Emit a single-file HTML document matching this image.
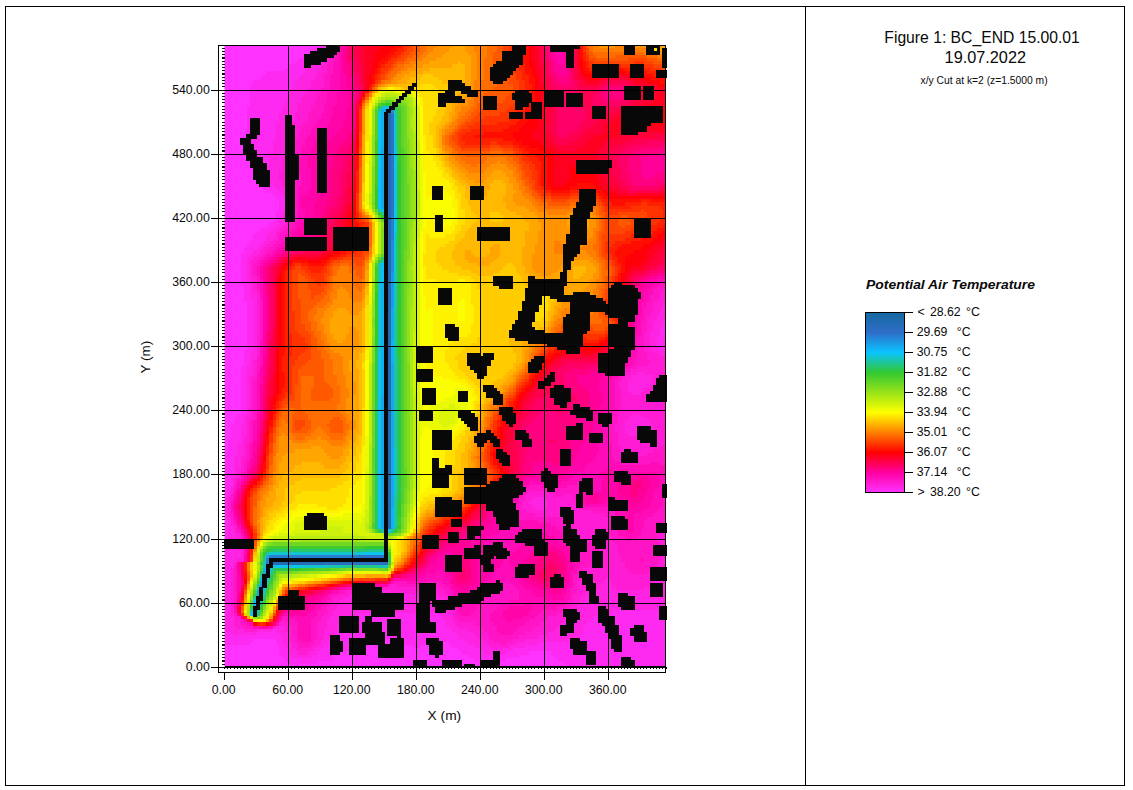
<!DOCTYPE html>
<html lang="en"><head><meta charset="utf-8"><title>Figure 1: BC_END 15.00.01</title>
<style>
html,body{margin:0;padding:0;background:#fff;}
body{width:1133px;height:790px;overflow:hidden;position:relative;font-family:"Liberation Sans",sans-serif;}
svg{position:absolute;left:0;top:0;display:block;}
text{font-family:"Liberation Sans",sans-serif;font-size:12.3px;fill:#0a0a0a;}
.t1{font-size:16.2px;}
.t3{font-size:10px;}
.lt{font-size:12px;font-weight:bold;font-style:italic;}
</style></head><body>
<svg width="1133" height="790" viewBox="0 0 1133 790">
<defs><linearGradient id="lg" x1="0" y1="0" x2="0" y2="1">
<stop offset="0" stop-color="#16699f"/><stop offset="0.1111" stop-color="#2e6ec8"/><stop offset="0.2222" stop-color="#0ac3ff"/><stop offset="0.3333" stop-color="#32c832"/><stop offset="0.5556" stop-color="#ffff00"/><stop offset="0.7778" stop-color="#ff0000"/><stop offset="0.8889" stop-color="#ff00a0"/><stop offset="1" stop-color="#ff32ff"/>
</linearGradient></defs>
<rect x="0" y="0" width="1133" height="790" fill="#fff"/>
<rect x="5.5" y="6.5" width="1119" height="779" fill="none" stroke="#000" stroke-width="1" shape-rendering="crispEdges"/>
<path d="M805.5 6V785" stroke="#000" stroke-width="1" fill="none" shape-rendering="crispEdges"/>
<rect x="218.5" y="45.5" width="447" height="627" fill="#fff" stroke="#000" stroke-width="1"/>
<rect x="224.5" y="45.5" width="441" height="621.5" fill="#ff32ff"/>
<g transform="translate(224.5,665.8) scale(3.2,-3.2075)" stroke-width="1.02" fill="none" shape-rendering="crispEdges">
<path stroke="#216bb2" d="M15 32h7M51 43h1M51 44h1M51 45h1M51 46h1M51 47h1M51 48h1M51 49h1M51 50h1M51 51h1M51 52h1M51 53h1M51 54h1M51 55h1M51 56h1M51 57h1M51 58h1M51 59h1M51 60h1M51 61h1M51 62h1M51 63h1M51 64h1M51 65h1M51 66h1M51 67h1M51 68h1M51 69h1M51 70h1M51 71h1M51 72h1M51 73h1M51 74h1M51 75h1M51 76h1M51 77h1M51 78h1M51 79h1M51 80h1M51 81h1M51 82h1M51 83h1M51 84h1M51 85h1M51 86h1M51 87h1M51 88h1M51 89h1M51 90h1M51 91h1M51 92h1M51 93h1M51 94h1M51 95h1M51 96h1M51 97h1M51 98h1M51 99h1M51 100h1M51 101h1M51 102h1M51 103h1M51 104h1M51 105h1M51 106h1M51 107h1M51 108h1M51 109h1M51 110h1M51 111h1M51 112h1M51 113h1M51 114h1M51 115h1M51 116h1M51 117h1M51 118h1M51 119h1M51 120h1M51 121h1M51 122h1M51 123h1M51 124h1M51 125h1M51 126h1M51 127h1M51 128h1M51 129h1M51 130h1M51 131h1M51 132h1M51 133h1M51 134h1M51 135h1M51 136h1M51 137h1M51 138h1M51 139h1M51 140h1M51 141h1M51 142h1M51 143h1M51 144h1M51 145h1M51 146h1M51 147h1M51 148h1M51 149h1M51 150h1M51 151h1M51 152h1M51 153h1M51 154h1M51 155h1M51 156h1M51 157h1M51 158h1M51 159h1M51 160h1M51 161h1M51 162h1M51 163h1M51 164h1M51 165h1M51 166h1M51 167h1M51 168h1M51 169h1M51 170h1M51 171h1M51 172h1"/>
<path stroke="#246cb8" d="M22 32h9"/>
<path stroke="#286dbe" d="M31 32h9"/>
<path stroke="#2c6ec4" d="M40 32h11"/>
<path stroke="#2c72cb" d="M42 34h8M52 141h1M52 142h1M52 143h1M52 144h1M52 145h1M52 146h1M52 147h1M52 148h1M52 149h1M52 150h1M52 151h1M52 152h1M52 153h1M52 154h1M52 155h1M52 156h1M52 157h1M52 158h1M52 159h1M52 160h1M52 161h1M52 162h1M52 163h1M52 164h1M52 165h1M52 166h1M52 167h1M52 168h1M52 169h1M52 170h1M52 171h1M52 172h1"/>
<path stroke="#277fd3" d="M13 32h1M13 33h1M14 34h28M52 133h1M52 134h1M52 135h1M52 136h1M52 137h1M52 138h1M52 139h1M52 140h1"/>
<path stroke="#218cdb" d="M52 123h1M52 124h1M52 125h1M52 126h1M52 127h1M52 128h1M52 129h1M52 130h1M52 131h1M52 132h1M52 173h1"/>
<path stroke="#1c98e4" d="M11 25h1M52 112h1M52 113h1M52 114h1M52 115h1M52 116h1M52 117h1M52 118h1M52 119h1M52 120h1M52 121h1M52 122h1"/>
<path stroke="#17a5ec" d="M10 22h1M10 23h1M11 26h1M12 29h1M13 34h1M49 43h1M49 44h1M49 45h1M49 46h1M49 47h1M49 48h1M49 49h1M49 50h1M52 50h1M49 51h1M52 51h1M49 52h1M52 52h1M49 53h1M52 53h1M49 54h1M52 54h1M49 55h1M52 55h1M49 56h1M52 56h1M49 57h1M52 57h1M49 58h1M52 58h1M49 59h1M52 59h1M49 60h1M52 60h1M49 61h1M52 61h1M49 62h1M52 62h1M49 63h1M52 63h1M49 64h1M52 64h1M49 65h1M52 65h1M49 66h1M52 66h1M49 67h1M52 67h1M49 68h1M52 68h1M49 69h1M52 69h1M49 70h1M52 70h1M49 71h1M52 71h1M49 72h1M52 72h1M49 73h1M52 73h1M49 74h1M52 74h1M49 75h1M52 75h1M49 76h1M52 76h1M49 77h1M52 77h1M49 78h1M52 78h1M49 79h1M52 79h1M49 80h1M52 80h1M49 81h1M52 81h1M49 82h1M52 82h1M49 83h1M52 83h1M49 84h1M52 84h1M52 85h1M52 86h1M52 87h1M52 88h1M52 89h1M52 90h1M52 91h1M52 92h1M52 93h1M52 94h1M52 102h1M52 103h1M52 104h1M52 105h1M52 106h1M52 107h1M52 108h1M52 109h1M52 110h1M52 111h1M49 143h1M49 144h1M49 145h1M49 146h1M49 147h1M49 148h1M49 149h1M49 150h1M49 151h1M49 152h1M49 153h1M49 154h1M49 155h1M49 156h1M49 157h1M49 158h1M49 159h1M49 160h1M49 161h1M50 173h1"/>
<path stroke="#11b2f4" d="M9 19h1M12 30h1M52 43h1M52 44h1M52 45h1M52 46h1M52 47h1M52 48h1M52 49h1M49 85h1M49 86h1M49 87h1M49 88h1M49 89h1M49 90h1M49 91h1M49 92h1M49 93h1M49 94h1M49 95h1M52 95h1M49 96h1M52 96h1M49 97h1M52 97h1M49 98h1M52 98h1M49 99h1M52 99h1M49 100h1M52 100h1M49 101h1M52 101h1M49 102h1M49 103h1M49 104h1M49 105h1M49 106h1M49 107h1M49 108h1M49 109h1M49 110h1M49 111h1M49 112h1M49 113h1M49 114h1M49 115h1M49 116h1M49 117h1M49 118h1M49 119h1M49 162h1M49 163h1M49 164h1M49 165h1M49 166h1M49 167h1M49 168h1M49 169h1M49 170h1M49 171h1M49 172h1M49 173h1"/>
<path stroke="#0cbffc" d="M9 20h1M11 27h1M49 120h1M49 121h1M49 122h1M49 123h1M49 124h1M49 125h1M48 143h1M48 144h1M48 145h1M48 146h1M48 147h1M48 148h1M48 149h1M48 150h1M48 151h1M48 152h1M48 153h1M48 154h1M50 174h1"/>
<path stroke="#0ec4ea" d="M8 16h1M10 24h1M12 24h1M13 27h1M15 31h9M43 35h7M51 42h1M48 43h1M48 44h1M48 45h1M48 46h1M48 47h1M48 48h1M48 49h1M48 50h1M48 51h1M48 52h1M48 53h1M48 54h1M48 55h1M48 56h1M48 57h1M48 58h1M48 59h1M48 60h1M48 61h1M48 62h1M48 63h1M48 64h1M48 65h1M48 66h1M48 67h1M48 68h1M48 69h1M48 70h1M48 71h1M48 72h1M48 73h1M48 74h1M48 75h1M48 76h1M48 77h1M48 78h1M48 79h1M48 80h1M48 81h1M48 82h1M48 83h1M48 84h1M48 85h1M48 86h1M48 87h1M48 88h1M48 89h1M48 90h1M48 91h1M48 92h1M48 93h1M48 94h1M48 95h1M48 96h1M48 97h1M53 135h1M53 136h1M53 137h1M53 138h1M53 139h1M53 140h1M53 141h1M49 142h1M53 142h1M53 143h1M53 144h1M53 145h1M53 146h1M53 147h1M53 148h1M53 149h1M53 150h1M53 151h1M53 152h1M53 153h1M53 154h1M48 155h1M53 155h1M48 156h1M53 156h1M48 157h1M53 157h1M48 158h1M53 158h1M48 159h1M53 159h1M48 160h1M53 160h1M48 161h1M53 161h1M48 162h1M48 163h1M48 164h1M48 165h1M48 166h1M48 167h1M48 168h1M48 169h1M48 170h1M48 171h1M48 172h1"/>
<path stroke="#14c4cc" d="M8 17h1M14 30h1M12 31h1M24 31h8M12 32h1M14 35h29M53 54h1M53 55h1M53 56h1M53 57h1M53 58h1M53 59h1M53 60h1M53 61h1M53 62h1M53 63h1M53 64h1M53 65h1M53 66h1M53 67h1M48 98h1M48 99h1M48 100h1M48 101h1M48 102h1M48 103h1M48 104h1M48 105h1M48 106h1M48 107h1M48 108h1M48 109h1M48 110h1M48 111h1M48 112h1M53 112h1M48 113h1M53 113h1M48 114h1M53 114h1M48 115h1M53 115h1M48 116h1M53 116h1M48 117h1M53 117h1M48 118h1M53 118h1M48 119h1M53 119h1M53 120h1M53 121h1M53 122h1M53 123h1M53 124h1M53 125h1M53 126h1M53 127h1M53 128h1M53 129h1M53 130h1M53 131h1M53 132h1M53 133h1M53 134h1M53 162h1M53 163h1M53 164h1M53 165h1M53 166h1M53 167h1M53 168h1M53 169h1M53 170h1M53 171h1M53 172h1M49 174h1M51 174h1"/>
<path stroke="#1ac5ad" d="M10 17h1M11 20h1M9 21h1M12 23h1M13 26h1M11 28h1M14 29h1M32 31h5M48 31h3M49 42h1M53 43h1M53 44h1M53 45h1M53 46h1M53 47h1M53 48h1M53 49h1M53 50h1M53 51h1M53 52h1M53 53h1M53 68h1M53 69h1M53 70h1M53 71h1M53 72h1M53 73h1M53 74h1M53 75h1M53 76h1M53 77h1M53 78h1M53 79h1M53 80h1M53 81h1M53 82h1M53 83h1M53 84h1M53 85h1M53 86h1M53 87h1M53 88h1M53 89h1M53 90h1M53 91h1M53 92h1M53 93h1M53 94h1M53 95h1M53 96h1M53 97h1M53 98h1M53 99h1M53 100h1M53 101h1M53 102h1M53 103h1M53 104h1M53 105h1M53 106h1M53 107h1M53 108h1M53 109h1M53 110h1M53 111h1M48 120h1M48 121h1M48 122h1M48 123h1M48 124h1M48 125h1M49 126h1M48 142h1M48 173h1M53 173h1"/>
<path stroke="#20c68e" d="M12 22h1M10 25h1M13 25h1M37 31h11M12 33h1M13 35h1M45 36h5M52 42h1M49 141h1"/>
<path stroke="#26c66f" d="M10 16h1M11 19h1M14 28h1M51 33h1M12 34h1M15 36h30M47 43h1M47 44h1M47 45h1M47 46h1M47 47h1M47 48h1M47 49h1M47 50h1M47 51h1M47 52h1M47 53h1M47 54h1M47 55h1M47 56h1M47 57h1M47 58h1M47 59h1M47 60h1M47 61h1M47 62h1M47 63h1M47 64h1M47 65h1M47 66h1M47 67h1M47 68h1M47 69h1M47 70h1M47 71h1M47 72h1M47 73h1M47 74h1M47 75h1M47 76h1M47 77h1M47 78h1M47 79h1M47 80h1M47 81h1M53 174h1"/>
<path stroke="#2cc751" d="M8 18h1M12 21h1M9 22h1M13 24h1M14 27h1M11 29h1M15 30h5M51 34h1M14 36h1M48 42h1M54 52h1M54 53h1M54 54h1M54 55h1M54 56h1M54 57h1M54 58h1M54 59h1M54 60h1M54 61h1M54 62h1M54 63h1M54 64h1M54 65h1M54 66h1M54 67h1M54 68h1M54 69h1M54 70h1M54 71h1M54 72h1M54 73h1M54 74h1M54 75h1M54 76h1M54 77h1M54 78h1M54 79h1M54 80h1M54 81h1M47 82h1M54 82h1M47 83h1M54 83h1M47 84h1M54 84h1M47 85h1M54 85h1M47 86h1M54 86h1M47 87h1M54 87h1M47 88h1M54 88h1M47 89h1M54 89h1M47 90h1M54 90h1M47 91h1M54 91h1M47 92h1M54 92h1M47 93h1M54 93h1M47 94h1M54 94h1M47 95h1M54 95h1M47 96h1M54 96h1M47 97h1M47 98h1M47 99h1M47 100h1M49 127h1"/>
<path stroke="#32c832" d="M11 18h1M20 30h4M12 35h1M13 36h1M44 37h6M53 42h1M54 43h1M54 47h1M54 48h1M54 49h1M54 50h1M54 51h1M54 97h1M54 98h1M54 99h1M54 100h1M47 101h1M54 101h1M47 102h1M54 102h1M47 103h1M54 103h1M47 104h1M54 104h1M47 105h1M54 105h1M47 106h1M54 106h1M47 107h1M54 107h1M47 108h1M54 108h1M47 109h1M54 109h1M47 110h1M54 110h1M47 111h1M54 111h1M47 112h1M54 112h1M47 113h1M54 113h1M47 114h1M54 114h1M47 115h1M54 115h1M47 116h1M54 116h1M54 117h1M54 118h1M54 119h1M54 120h1M54 121h1M54 122h1M54 123h1M54 124h1M54 125h1M48 126h1M54 126h1M54 127h1M54 128h1M54 129h1M54 130h1M54 131h1M54 132h1M54 133h1M54 134h1M54 135h1M54 136h1M54 137h1M54 138h1M54 139h1M49 140h1M54 140h1M48 141h1M54 141h1M54 142h1M47 143h1M54 143h1M47 144h1M54 144h1M47 145h1M54 145h1M47 146h1M54 146h1M47 147h1M54 147h1M47 148h1M54 148h1M47 149h1M54 149h1M54 150h1M54 151h1M54 152h1M54 153h1M54 154h1M54 155h1M54 156h1M54 157h1M48 174h1M50 175h2"/>
<path stroke="#41cc2e" d="M12 20h1M13 23h1M10 26h1M14 26h1M15 29h1M24 30h4M11 32h1M51 32h1M51 35h1M14 37h30M54 44h1M54 45h1M54 46h1M47 117h1M47 118h1M47 119h1M47 120h1M47 121h1M47 122h1M47 123h1M47 124h1M47 150h1M47 151h1M47 152h1M47 153h1M47 154h1M47 155h1M47 156h1M47 157h1M47 158h1M54 158h1M47 159h1M54 159h1M47 160h1M54 160h1M47 161h1M54 161h1M47 162h1M54 162h1M47 163h1M54 163h1M54 164h1M54 165h1M54 166h1M54 167h1M54 168h1M54 169h1M54 170h1M54 171h1M54 172h1M54 173h1M49 175h1M52 175h1"/>
<path stroke="#51d02b" d="M11 17h1M8 19h1M13 22h1M9 23h1M14 25h1M15 28h1M11 30h1M28 30h5M12 36h1M13 37h1M47 42h1M54 42h1M46 43h1M46 44h1M55 51h1M55 52h1M55 53h1M55 54h1M55 55h1M55 56h1M55 57h1M55 58h1M55 59h1M55 60h1M55 61h1M55 62h1M55 63h1M55 64h1M55 65h1M55 66h1M55 67h1M55 68h1M55 69h1M55 70h1M55 71h1M55 72h1M55 73h1M55 74h1M55 75h1M55 76h1M55 77h1M55 78h1M55 79h1M55 80h1M55 81h1M55 82h1M55 83h1M55 84h1M55 85h1M55 86h1M55 87h1M55 88h1M55 89h1M55 90h1M55 91h1M55 92h1M55 93h1M55 94h1M55 95h1M55 96h1M55 97h1M55 98h1M55 99h1M55 100h1M55 101h1M55 102h1M55 103h1M55 104h1M55 105h1M55 106h1M55 107h1M55 108h1M55 109h1M55 110h1M55 111h1M55 112h1M55 113h1M55 114h1M55 115h1M55 116h1M55 117h1M55 118h1M55 119h1M55 120h1M55 121h1M55 122h1M55 123h1M55 124h1M47 125h1M55 125h1M55 126h1M55 127h1M55 128h1M55 129h1M55 130h1M55 131h1M55 132h1M55 133h1M55 134h1M55 135h1M55 136h1M55 137h1M55 138h1M55 139h1M55 140h1M55 141h1M55 142h1M55 143h1M55 144h1M55 145h1M55 146h1M55 147h1M55 148h1M55 149h1M55 150h1M55 151h1M55 152h1M55 153h1M55 154h1M55 155h1M55 156h1M55 157h1M55 158h1M55 159h1M55 160h1M55 161h1M47 164h1M47 165h1M47 166h1M47 167h1M47 168h1M47 169h1M47 170h1M47 171h1M47 172h1M47 173h1M54 174h1"/>
<path stroke="#60d427" d="M12 19h1M14 24h1M10 27h1M15 27h1M33 30h3M50 30h1M11 31h1M11 33h1M11 34h1M51 41h1M46 45h1M46 46h1M46 47h1M55 47h1M46 48h1M55 48h1M46 49h1M55 49h1M46 50h1M55 50h1M46 51h1M46 52h1M46 53h1M46 54h1M46 55h1M46 56h1M56 56h1M46 57h1M56 57h1M46 58h1M56 58h1M46 59h1M56 59h1M46 60h1M56 60h1M46 61h1M56 61h1M46 62h1M46 63h1M46 64h1M46 65h1M46 66h1M46 67h1M48 127h1M49 128h1M56 130h1M56 131h1M56 132h1M56 133h1M56 134h1M56 135h1M56 136h1M56 137h1M56 138h1M49 139h1M56 139h1M48 140h1M56 140h1M56 141h1M47 142h1M56 142h1M56 143h1M56 144h1M56 145h1M56 146h1M56 147h1M56 148h1M56 149h1M56 150h1M56 151h1M56 152h1M56 153h1M56 154h1M56 155h1M56 156h1M56 157h1M56 158h1M56 159h1M56 160h1M55 162h1M55 163h1M55 164h1M55 165h1M55 166h1M55 167h1M55 168h1M55 169h1M55 170h1M55 171h1M55 172h1M55 173h1M55 174h1M48 175h1M54 175h1M50 176h2"/>
<path stroke="#70d823" d="M11 16h1M8 20h1M13 21h1M9 24h1M16 29h5M36 30h2M48 30h2M51 31h1M11 35h1M51 36h1M15 38h35M52 41h1M55 43h1M55 44h1M55 45h1M55 46h1M56 51h1M56 52h1M56 53h1M56 54h1M56 55h1M56 62h1M56 63h1M56 64h1M56 65h1M56 66h1M56 67h1M46 68h1M56 68h1M46 69h1M56 69h1M46 70h1M56 70h1M46 71h1M56 71h1M46 72h1M56 72h1M46 73h1M56 73h1M46 74h1M56 74h1M46 75h1M56 75h1M46 76h1M56 76h1M46 77h1M56 77h1M46 78h1M56 78h1M46 79h1M56 79h1M46 80h1M56 80h1M46 81h1M56 81h1M46 82h1M56 82h1M46 83h1M56 83h1M46 84h1M56 84h1M46 85h1M56 85h1M46 86h1M56 86h1M46 87h1M56 87h1M46 88h1M56 88h1M46 89h1M56 89h1M46 90h1M56 90h1M46 91h1M56 91h1M46 92h1M56 92h1M46 93h1M56 93h1M46 94h1M56 94h1M56 95h1M56 96h1M56 97h1M56 98h1M56 99h1M56 100h1M56 101h1M56 102h1M56 103h1M56 104h1M56 105h1M56 106h1M56 107h1M56 108h1M56 109h1M56 110h1M56 111h1M56 112h1M56 113h1M56 114h1M56 115h1M56 116h1M56 117h1M56 118h1M56 119h1M56 120h1M56 121h1M56 122h1M56 123h1M56 124h1M56 125h1M56 126h1M56 127h1M56 128h1M56 129h1M57 140h1M57 141h1M57 142h1M57 143h1M46 144h1M57 144h1M57 145h1M57 146h1M57 147h1M57 148h1M57 149h1M57 150h1M56 161h1M56 162h1M56 163h1M56 164h1M56 165h1M56 166h1M56 167h1M56 168h1M56 169h1M56 170h1M56 171h1M56 172h1M56 173h1M47 174h1M56 174h1M55 175h1M52 176h1"/>
<path stroke="#7fdd1f" d="M10 15h1M12 18h1M14 23h1M9 25h1M15 26h1M10 28h1M16 28h1M21 29h2M38 30h10M12 37h1M14 38h1M53 41h1M46 42h1M55 42h1M56 47h1M56 48h1M56 49h1M56 50h1M57 55h1M57 56h1M57 57h1M57 58h1M57 59h1M57 60h1M57 61h1M57 62h1M57 63h1M57 64h1M57 65h1M57 66h1M57 67h1M57 68h1M57 69h1M57 70h1M57 71h1M57 72h1M57 73h1M57 74h1M57 75h1M57 76h1M57 77h1M57 78h1M57 79h1M57 80h1M57 81h1M57 82h1M57 83h1M57 84h1M57 85h1M57 86h1M57 87h1M57 88h1M57 89h1M57 90h1M57 91h1M57 92h1M57 93h1M57 94h1M46 95h1M46 96h1M46 97h1M46 98h1M46 99h1M46 100h1M46 101h1M46 102h1M46 106h1M46 107h1M46 108h1M57 118h1M57 119h1M47 126h1M57 127h1M57 128h1M49 129h1M57 129h1M49 130h1M57 130h1M49 131h1M57 131h1M49 132h1M57 132h1M49 133h1M57 133h1M49 134h1M57 134h1M49 135h1M57 135h1M49 136h1M57 136h1M57 137h1M57 138h1M57 139h1M47 141h1M46 143h1M46 145h1M46 146h1M46 147h1M46 148h1M46 149h1M46 150h1M46 151h1M57 151h1M46 152h1M57 152h1M46 153h1M57 153h1M46 154h1M57 154h1M46 155h1M57 155h1M57 156h1M57 157h1M57 158h1M57 159h1M57 160h1M57 161h1M57 162h1M57 163h1M57 164h1M56 175h1M49 176h1M55 176h1"/>
<path stroke="#8ee11c" d="M9 15h1M13 20h1M8 21h1M14 22h1M15 24h1M15 25h1M16 27h1M10 29h1M23 29h3M11 36h1M13 38h1M54 41h1M45 43h1M56 43h1M56 44h1M56 45h1M56 46h1M57 51h1M57 52h1M57 53h1M57 54h1M57 95h1M57 96h1M57 97h1M57 98h1M57 99h1M57 100h1M57 101h1M57 102h1M46 103h1M57 103h1M46 104h1M57 104h1M46 105h1M57 105h1M57 106h1M57 107h1M57 108h1M46 109h1M57 109h1M46 110h1M57 110h1M46 111h1M57 111h1M46 112h1M57 112h1M46 113h1M57 113h1M46 114h1M57 114h1M57 115h1M57 116h1M57 117h1M57 120h1M57 121h1M57 122h1M57 123h1M57 124h1M57 125h1M57 126h1M48 128h1M49 137h1M58 137h1M49 138h1M58 138h1M58 139h1M58 140h1M58 141h1M58 142h1M58 143h1M58 144h1M58 145h1M58 146h1M58 147h1M58 148h1M58 149h1M58 150h1M58 151h1M58 152h1M58 153h1M58 154h1M58 155h1M46 156h1M46 157h1M46 158h1M46 159h1M46 160h1M46 161h1M46 162h1M46 163h1M46 164h1M46 165h1M57 165h1M57 166h1M57 167h1M57 168h1M57 169h1M57 170h1M57 171h1M57 172h1M57 173h1M57 174h1M53 176h1M56 176h1"/>
<path stroke="#9ee518" d="M11 15h1M7 17h1M12 17h1M14 21h1M8 22h1M15 23h1M9 26h1M16 26h1M26 29h4M10 32h1M51 37h1M24 39h18M56 42h1M45 44h1M45 45h1M45 46h1M45 47h1M45 48h1M57 48h1M45 49h1M57 49h1M45 50h1M57 50h1M45 51h1M45 52h1M58 55h1M58 56h1M58 57h1M58 58h1M58 59h1M58 60h1M58 61h1M58 62h1M58 63h1M58 64h1M58 65h1M58 66h1M58 67h1M58 68h1M58 69h1M58 70h1M58 71h1M58 72h1M58 73h1M58 74h1M58 75h1M58 76h1M58 77h1M58 78h1M58 79h1M58 80h1M58 81h1M58 82h1M58 83h1M58 84h1M58 85h1M58 86h1M58 112h1M58 113h1M58 114h1M46 115h1M58 115h1M46 116h1M58 116h1M46 117h1M58 117h1M46 118h1M58 118h1M46 119h1M58 119h1M46 120h1M58 120h1M58 121h1M58 122h1M58 123h1M58 125h1M58 126h1M47 127h1M58 127h1M58 128h1M58 129h1M58 130h1M58 131h1M58 132h1M58 133h1M58 134h1M58 135h1M58 136h1M48 139h1M59 139h1M59 140h1M59 141h1M46 142h1M59 142h1M59 143h1M59 144h1M59 145h1M59 146h1M59 147h1M59 148h1M59 149h1M59 150h1M59 151h1M59 152h1M59 153h1M59 154h1M58 156h1M58 157h1M58 158h1M58 159h1M58 160h1M58 161h1M58 162h1M58 163h1M58 164h1M58 165h1M46 166h1M58 166h1M46 167h1M58 167h1M46 168h1M46 169h1M46 170h1M46 171h1M46 172h1M58 172h1M46 173h1M58 173h1M47 175h1M57 175h1M48 176h1M57 176h1M50 177h4M56 177h1"/>
<path stroke="#ade914" d="M7 16h1M7 18h1M13 19h1M15 22h1M8 23h1M16 25h1M17 28h4M30 29h3M10 30h1M51 30h1M10 31h1M12 38h1M15 39h9M42 39h8M51 40h1M45 42h1M57 45h1M57 46h1M57 47h1M58 51h1M58 52h1M45 53h1M58 53h1M45 54h1M58 54h1M45 55h1M45 56h1M45 57h1M45 58h1M45 59h1M45 60h1M45 61h1M45 62h1M45 63h1M45 64h1M45 65h1M45 66h1M45 67h1M45 68h1M45 69h1M58 87h1M58 88h1M58 89h1M58 90h1M58 91h1M58 92h1M58 93h1M58 94h1M58 95h1M58 96h1M58 97h1M58 98h1M58 99h1M58 100h1M58 101h1M58 102h1M58 103h1M58 104h1M58 105h1M58 106h1M58 107h1M58 108h1M58 109h1M58 110h1M58 111h1M46 121h1M46 122h1M46 123h1M46 124h1M58 124h1M46 125h1M59 132h1M59 133h1M59 134h1M59 135h1M59 136h1M59 137h1M59 138h1M47 140h1M59 155h1M59 156h1M59 157h1M59 158h1M59 159h1M59 160h1M59 161h1M59 162h1M59 163h1M59 164h1M59 165h1M59 166h1M58 168h1M58 169h1M58 170h1M58 171h1M58 174h1M58 175h1M58 176h1M49 177h1M54 177h1M57 177h1"/>
<path stroke="#bced10" d="M12 16h1M13 18h1M7 19h1M14 20h1M9 27h1M17 27h1M21 28h3M33 29h2M52 32h1M10 33h1M10 34h1M11 37h1M14 39h1M20 40h24M52 40h1M49 41h1M55 41h1M44 43h1M57 43h1M44 44h1M57 44h1M58 49h1M58 50h1M59 56h1M59 57h1M59 58h1M59 59h1M59 60h1M59 61h1M59 62h1M59 63h1M59 64h1M59 65h1M59 66h1M59 67h1M59 68h1M59 69h1M45 70h1M59 70h1M45 71h1M59 71h1M45 72h1M59 72h1M45 73h1M59 73h1M45 74h1M59 74h1M45 75h1M59 75h1M45 76h1M59 76h1M45 77h1M59 77h1M45 78h1M59 78h1M45 79h1M59 79h1M45 80h1M59 80h1M45 81h1M59 81h1M45 82h1M59 82h1M45 83h1M59 83h1M45 84h1M59 84h1M45 85h1M45 86h1M45 87h1M45 88h1M45 89h1M45 90h1M45 91h1M45 92h1M45 93h1M45 94h1M59 105h1M59 106h1M59 107h1M59 108h1M59 109h1M59 110h1M59 111h1M59 112h1M59 113h1M59 114h1M59 115h1M59 116h1M59 117h1M59 118h1M59 119h1M59 120h1M59 121h1M59 122h1M59 123h1M59 124h1M59 125h1M59 126h1M59 127h1M59 128h1M48 129h1M59 129h1M48 130h1M59 130h1M48 131h1M59 131h1M48 132h1M48 133h1M48 134h1M48 135h1M48 136h1M48 137h1M48 138h1M60 141h1M60 142h1M60 143h1M45 144h1M60 144h1M45 145h1M60 145h1M45 146h1M60 146h1M45 147h1M60 147h1M60 148h1M59 167h1M59 168h1M59 169h1M59 170h1M59 171h1M59 172h1M59 173h1M46 174h1M59 174h1M48 177h1M58 177h1M50 178h4M57 178h1"/>
<path stroke="#ccf10c" d="M14 19h1M15 21h1M8 24h1M16 24h1M24 28h2M35 29h2M10 35h1M51 38h1M13 39h1M15 40h5M44 40h6M53 40h1M22 41h20M47 41h2M30 42h7M44 42h1M57 42h1M32 43h5M44 45h1M44 46h1M44 47h1M58 47h1M44 48h1M58 48h1M59 52h1M59 53h1M59 54h1M59 55h1M59 85h1M59 86h1M59 87h1M59 88h1M59 89h1M59 90h1M59 91h1M59 92h1M59 93h1M59 94h1M45 95h1M59 95h1M45 96h1M59 96h1M45 97h1M59 97h1M45 98h1M59 98h1M59 99h1M59 100h1M59 101h1M59 102h1M59 103h1M59 104h1M46 126h1M47 128h1M60 134h1M60 135h1M60 136h1M60 137h1M60 138h1M60 139h1M60 140h1M46 141h1M45 143h1M45 148h1M45 149h1M60 149h1M45 150h1M60 150h1M45 151h1M60 151h1M45 152h1M60 152h1M45 153h1M60 153h1M45 154h1M60 154h1M45 155h1M60 155h1M45 156h1M60 156h1M45 157h1M60 157h1M60 158h1M60 159h1M60 160h1M60 161h1M60 162h1M60 163h1M59 175h1M47 176h1M59 176h1M49 178h1M54 178h1"/>
<path stroke="#dbf509" d="M8 15h1M12 15h1M13 17h1M7 20h1M16 23h1M17 26h1M18 27h3M9 28h1M26 28h3M37 29h2M49 29h2M10 36h1M14 40h1M17 41h5M42 41h5M56 41h1M21 42h9M37 42h7M22 43h3M37 43h7M22 44h3M32 44h12M58 44h1M24 45h1M32 45h10M43 45h1M58 45h1M43 46h1M58 46h1M44 49h1M44 50h1M59 50h1M44 51h1M59 51h1M44 52h1M44 53h1M44 54h1M44 55h1M60 55h1M44 56h1M60 56h1M44 57h1M60 57h1M44 58h1M60 58h1M44 59h1M60 59h1M44 60h1M60 60h1M44 61h1M60 61h1M60 62h1M60 63h1M60 64h1M60 65h1M60 66h1M60 67h1M60 68h1M60 69h1M60 70h1M60 71h1M60 72h1M60 73h1M60 74h1M60 75h1M68 75h2M60 76h1M67 76h5M60 77h1M67 77h5M60 78h1M67 78h6M60 79h1M67 79h6M60 80h1M68 80h5M60 81h1M70 81h2M60 82h1M60 83h1M60 84h1M60 85h1M60 86h1M60 87h1M60 88h1M60 93h1M60 94h1M45 99h1M45 100h1M60 100h1M45 101h1M60 101h1M45 102h1M60 102h1M45 103h1M60 103h1M45 104h1M60 104h1M45 105h1M60 105h1M45 106h1M60 106h1M45 107h1M60 107h1M45 108h1M60 108h1M45 109h1M60 109h1M45 110h1M60 110h1M45 111h1M60 111h1M45 112h1M60 112h1M60 113h1M60 114h1M60 115h1M60 116h1M60 117h1M60 118h1M60 119h1M60 120h1M60 121h1M60 122h1M60 123h1M60 124h1M60 125h1M60 126h1M60 127h1M60 128h1M60 129h1M60 130h1M60 131h1M60 132h1M60 133h1M47 139h1M45 158h1M45 159h1M45 160h1M45 161h1M45 162h1M45 163h1M45 164h1M60 164h1M45 165h1M60 165h1M60 166h1M60 167h1M60 168h1M60 169h1M60 170h1M60 171h1M60 172h1M60 173h1M60 174h1M46 175h1M47 177h1M59 177h1M58 178h1M50 179h3"/>
<path stroke="#eafa05" d="M13 16h1M14 18h1M7 21h1M8 25h1M21 27h2M29 28h2M39 29h10M9 30h1M9 31h1M52 31h1M9 32h1M52 33h1M52 34h1M52 35h1M52 36h1M12 39h1M51 39h1M13 40h1M54 40h1M15 41h2M17 42h4M18 43h4M58 43h1M19 44h3M21 45h3M42 45h1M22 46h3M32 46h11M25 47h1M37 47h7M43 48h1M59 48h1M43 49h1M59 49h1M43 50h1M60 52h1M60 53h1M60 54h1M44 62h1M44 63h1M44 64h1M44 65h1M44 66h1M44 67h1M44 68h1M44 69h1M44 70h1M44 71h1M61 72h1M61 73h1M61 74h1M64 74h7M61 75h7M70 75h2M61 76h6M72 76h1M65 77h2M72 77h2M65 78h2M65 79h2M61 80h1M64 80h4M73 80h3M61 81h1M64 81h6M72 81h4M61 82h1M67 82h9M69 83h4M71 84h2M72 85h1M72 86h2M45 113h1M45 114h1M45 115h1M45 116h1M46 127h1M61 136h1M61 137h1M61 138h1M61 139h1M46 140h1M61 140h1M61 141h1M45 142h1M61 142h1M61 143h1M44 144h1M61 144h1M44 145h1M61 145h1M44 146h1M61 146h1M44 147h1M61 147h1M61 148h1M61 149h1M61 150h1M61 151h1M61 152h1M61 153h1M61 154h1M61 155h1M61 156h1M61 157h1M61 158h1M61 159h1M45 166h1M45 167h1M45 168h1M45 169h1M45 170h1M45 171h1M45 172h1M45 173h1M60 175h1M46 176h1M48 178h1M55 178h1M49 179h1M53 179h1M58 179h1"/>
<path stroke="#fafe01" d="M10 14h2M15 20h1M7 22h1M16 22h1M17 25h1M8 26h1M18 26h1M23 27h3M31 28h2M9 29h1M52 37h1M11 38h1M52 38h1M52 39h1M14 41h1M15 42h2M58 42h1M16 43h2M17 44h2M18 45h3M20 46h2M59 46h1M21 47h4M31 47h6M59 47h1M23 48h7M36 48h7M40 49h3M42 50h1M60 50h1M43 51h1M60 51h1M43 52h1M43 53h1M43 54h1M61 54h1M43 55h1M61 55h2M43 56h1M61 56h3M43 57h1M61 57h4M43 58h1M61 58h4M43 59h1M61 59h4M43 60h1M61 60h4M61 61h4M61 62h4M61 63h4M61 64h4M61 65h4M61 66h4M61 67h4M61 68h4M61 69h4M61 70h4M61 71h4M44 72h1M62 72h3M44 73h1M62 73h3M71 73h1M44 74h1M62 74h2M71 74h2M44 75h1M72 75h2M44 76h1M73 76h2M44 77h1M44 78h1M44 79h1M44 80h1M62 80h2M76 80h1M44 81h1M62 81h2M76 81h1M44 82h1M66 82h1M76 82h1M44 83h1M61 83h1M66 83h3M76 83h2M44 84h1M61 84h1M66 84h5M76 84h1M44 85h1M61 85h1M66 85h6M76 85h1M44 86h1M61 86h1M66 86h6M74 86h2M44 87h1M61 87h14M44 88h1M61 88h13M44 89h1M65 89h6M44 90h1M65 90h3M44 91h1M44 92h1M44 93h1M61 93h2M44 94h1M61 94h2M44 95h1M61 100h4M61 101h4M61 102h4M61 103h4M61 104h4M61 105h4M61 106h4M61 107h4M61 108h4M73 108h2M61 109h4M73 109h2M61 110h4M73 110h2M61 111h2M64 111h1M73 111h2M61 112h2M73 112h2M61 113h2M73 113h2M61 114h2M74 114h1M61 115h2M61 116h1M45 117h1M61 117h1M45 118h1M61 118h1M45 119h1M61 119h1M45 120h1M61 120h1M61 121h1M61 122h1M61 123h1M61 124h1M61 125h1M61 126h1M61 127h1M61 128h1M47 129h1M61 129h1M47 130h1M61 130h1M47 131h1M61 131h1M47 132h1M61 132h1M47 133h1M61 133h1M47 134h1M61 134h1M47 135h1M61 135h1M47 136h1M47 137h1M62 137h1M68 137h1M47 138h1M62 138h1M68 138h3M62 139h1M65 139h1M68 139h3M62 140h4M68 140h4M62 141h10M62 142h10M44 143h1M62 143h9M62 144h9M62 145h9M62 146h1M64 146h1M68 146h3M62 147h1M68 147h2M44 148h1M62 148h1M68 148h1M44 149h1M62 149h1M44 150h1M62 150h1M44 151h1M62 151h1M44 152h1M62 152h1M44 153h1M62 153h1M44 154h1M44 155h1M44 156h1M61 160h1M61 161h1M61 162h1M61 163h1M61 164h1M61 165h1M61 166h1M61 167h1M61 168h1M61 169h1M61 170h1M61 171h1M61 172h1M61 173h1M45 174h1M61 174h1M60 176h1M60 177h1M59 178h1M54 179h1"/>
<path stroke="#fff200" d="M9 14h1M12 14h1M13 15h1M6 17h1M19 26h2M26 27h2M33 28h2M51 29h1M53 35h1M53 36h1M53 37h1M53 38h1M53 39h1M12 40h1M55 40h1M13 41h1M57 41h1M14 42h1M15 43h1M59 43h1M15 44h2M59 44h1M16 45h2M59 45h1M17 46h3M19 47h2M20 48h3M30 48h6M60 48h1M22 49h10M35 49h5M60 49h1M23 50h6M37 50h5M38 51h5M38 52h5M61 52h1M39 53h4M61 53h3M39 54h4M62 54h5M39 55h4M63 55h5M40 56h3M64 56h1M41 57h2M42 58h1M43 61h1M43 62h1M67 62h2M43 63h1M67 63h2M43 64h1M67 64h2M43 65h1M65 65h4M43 66h1M65 66h4M43 67h1M65 67h4M43 68h1M71 71h1M71 72h2M72 73h2M73 74h2M74 75h1M77 79h1M77 80h1M77 81h1M77 82h1M78 83h1M77 84h2M77 85h1M76 86h2M75 87h2M74 88h2M71 89h4M68 90h5M65 91h7M65 92h6M63 93h7M63 94h7M65 95h4M44 96h1M65 96h4M44 97h1M65 97h4M44 98h1M65 98h4M65 99h5M65 100h5M65 101h6M65 102h5M65 103h4M73 103h3M65 104h4M73 104h4M65 105h4M73 105h4M65 106h4M72 106h5M65 107h13M65 108h8M75 108h3M65 109h8M75 109h3M65 110h8M75 110h3M63 111h1M65 111h8M75 111h3M63 112h10M75 112h3M63 113h4M71 113h2M75 113h2M63 114h4M71 114h3M75 114h2M63 115h4M71 115h6M62 116h5M71 116h6M62 117h5M71 117h6M62 118h15M62 119h15M62 120h4M73 120h2M45 121h1M62 121h1M45 122h1M62 122h1M45 123h1M62 123h1M45 124h1M62 124h1M45 125h1M62 129h1M62 130h1M62 131h1M62 132h1M62 133h1M62 134h1M64 134h5M62 135h9M62 136h4M68 136h4M63 137h3M69 137h3M63 138h3M71 138h2M63 139h2M71 139h2M72 140h1M45 141h1M72 141h1M72 142h1M71 143h2M71 144h2M71 145h2M63 146h1M71 146h1M63 147h2M70 147h2M63 148h2M69 148h3M63 149h2M68 149h3M63 150h8M63 151h7M63 152h6M63 153h5M62 154h6M62 155h5M62 156h4M44 157h1M62 157h4M44 158h1M62 158h3M44 159h1M62 159h3M44 160h1M62 160h2M44 161h1M62 161h1M44 162h1M62 162h1M44 163h1M62 163h1M62 164h1M62 165h1M45 175h1M61 175h1M61 176h1M46 177h1M61 177h1M47 178h1M60 178h1M48 179h1M55 179h1M59 179h1M51 180h2"/>
<path stroke="#ffdf00" d="M14 17h1M6 18h1M15 19h1M7 23h1M17 24h1M21 26h2M8 27h1M28 27h2M35 28h2M9 33h1M53 34h1M54 35h1M54 36h1M10 37h1M54 37h1M54 38h1M11 39h1M54 39h1M12 41h1M13 42h1M13 43h2M14 44h1M14 45h2M15 46h2M16 47h3M60 47h1M18 48h2M19 49h3M32 49h3M20 50h3M29 50h8M61 50h1M21 51h17M61 51h2M22 52h16M62 52h4M22 53h17M64 53h4M24 54h15M67 54h3M33 55h6M68 55h3M35 56h5M70 56h1M37 57h4M70 57h1M39 58h3M70 58h1M39 59h4M70 59h1M40 60h3M41 61h2M41 62h2M41 63h2M69 63h3M42 64h1M69 64h3M42 65h1M69 65h3M42 66h1M69 66h3M69 67h3M71 68h2M43 69h1M71 69h2M43 70h1M71 70h3M43 71h1M72 71h2M43 72h1M73 72h2M43 73h1M74 73h1M43 74h1M75 74h1M43 75h1M75 75h1M43 76h1M43 77h1M43 78h1M43 79h1M78 79h1M43 80h1M78 80h1M78 81h1M78 82h2M79 83h1M79 84h1M78 85h2M78 86h2M77 87h2M76 88h2M75 89h2M73 90h3M72 91h3M71 92h3M43 93h1M70 93h3M43 94h1M70 94h3M69 95h4M69 96h3M69 97h4M69 98h5M44 99h1M70 99h5M44 100h1M70 100h7M44 101h1M71 101h8M44 102h1M73 102h6M44 103h1M76 103h4M44 104h1M77 104h3M44 105h1M77 105h3M44 106h1M77 106h3M44 107h1M78 107h2M44 108h1M78 108h2M97 108h2M44 109h1M78 109h2M97 109h3M44 110h1M78 110h2M97 110h3M44 111h1M78 111h2M98 111h3M44 112h1M78 112h2M98 112h3M77 113h3M99 113h2M77 114h3M99 114h2M77 115h3M99 115h2M77 116h3M77 117h3M77 118h2M77 119h2M66 120h7M75 120h3M63 121h14M63 122h10M63 123h7M63 124h5M62 125h5M62 126h4M62 127h4M46 128h1M62 128h4M63 129h3M63 130h4M63 131h6M63 132h7M63 133h9M63 134h1M69 134h3M71 135h2M72 136h2M72 137h2M73 138h2M46 139h1M73 139h2M73 140h2M73 141h2M44 142h1M73 142h2M73 143h1M43 144h1M73 144h1M73 145h1M72 146h2M72 147h2M72 148h1M71 149h2M71 150h1M70 151h2M69 152h2M68 153h2M68 154h1M67 155h2M66 156h2M66 157h2M65 158h2M65 159h1M64 160h2M63 161h3M63 162h2M63 163h2M44 164h1M63 164h2M44 165h1M63 165h2M44 166h1M62 166h2M44 167h1M62 167h2M44 168h1M62 168h2M44 169h1M62 169h2M44 170h1M62 170h3M44 171h1M62 171h3M44 172h1M62 172h4M44 173h1M62 173h4M62 174h5M62 175h5M45 176h1M62 176h5M62 177h5M61 178h6M56 179h1M60 179h7M50 180h1M53 180h2M59 180h7M61 181h4"/>
<path stroke="#ffcc00" d="M6 16h1M6 19h1M16 21h1M23 26h2M30 27h2M37 28h1M8 30h1M52 30h1M8 31h1M8 32h1M53 33h1M9 34h1M54 34h1M55 36h1M55 37h1M55 38h1M55 39h1M56 40h1M58 41h1M12 42h1M59 42h1M13 44h1M13 45h1M60 45h1M14 46h1M60 46h1M14 47h2M15 48h3M61 48h1M17 49h2M61 49h2M18 50h2M62 50h2M18 51h3M63 51h3M19 52h3M19 53h3M68 53h3M19 54h5M70 54h2M19 55h14M71 55h2M20 56h15M71 56h2M22 57h15M71 57h2M24 58h15M71 58h2M36 59h3M71 59h2M37 60h3M71 60h2M38 61h3M71 61h3M39 62h2M71 62h3M39 63h2M72 63h2M40 64h2M72 64h2M40 65h2M72 65h2M41 66h1M72 66h2M41 67h2M72 67h3M41 68h2M73 68h2M42 69h1M73 69h2M42 70h1M74 70h2M42 71h1M74 71h2M75 72h2M75 73h2M76 74h1M78 78h1M79 79h1M79 80h1M43 81h1M79 81h1M43 82h1M80 82h1M43 83h1M80 83h1M43 84h1M80 84h2M43 85h1M80 85h2M43 86h1M80 86h1M43 87h1M79 87h2M43 88h1M78 88h6M43 89h1M77 89h8M43 90h1M76 90h3M81 90h6M43 91h1M75 91h4M82 91h6M43 92h1M74 92h4M82 92h7M73 93h4M82 93h8M73 94h3M83 94h7M43 95h1M73 95h3M83 95h8M43 96h1M72 96h4M84 96h7M43 97h1M73 97h3M80 97h1M84 97h7M74 98h16M75 99h15M77 100h12M79 101h10M79 102h10M80 103h9M80 104h9M80 105h10M97 105h1M80 106h10M96 106h4M80 107h11M96 107h4M80 108h12M99 108h2M80 109h12M100 109h1M80 110h12M100 110h1M80 111h13M101 111h1M80 112h13M101 112h1M44 113h1M80 113h13M101 113h1M44 114h1M80 114h14M101 114h2M44 115h1M80 115h14M101 115h1M80 116h14M80 117h14M79 118h7M90 118h5M79 119h5M90 119h4M78 120h6M90 120h3M77 121h7M90 121h3M73 122h6M84 122h8M70 123h7M86 123h5M68 124h6M87 124h4M67 125h5M88 125h2M45 126h1M66 126h6M66 127h5M66 128h5M46 129h1M66 129h5M46 130h1M67 130h5M46 131h1M69 131h3M70 132h3M72 133h2M72 134h3M73 135h2M74 136h2M74 137h3M75 138h3M75 139h4M83 139h4M75 140h4M83 140h4M75 141h3M83 141h3M75 142h2M43 143h1M74 143h3M74 144h2M43 145h1M74 145h2M43 146h1M74 146h1M43 147h1M74 147h1M43 148h1M73 148h2M43 149h1M73 149h2M43 150h1M72 150h2M72 151h1M71 152h1M70 153h1M69 154h2M69 155h1M68 156h1M68 157h1M67 158h1M66 159h2M66 160h1M66 161h1M65 162h1M65 163h1M65 164h1M65 165h1M64 166h2M64 167h2M64 168h2M64 169h3M65 170h3M65 171h3M66 172h3M66 173h3M44 174h1M67 174h2M46 178h1M67 179h2M49 180h1M55 180h1M66 180h4M60 181h1M65 181h5M60 182h8M61 183h6M62 184h3"/>
<path stroke="#ffb900" d="M14 16h1M17 23h1M7 24h1M18 25h2M25 26h1M32 27h1M8 28h1M38 28h6M50 28h1M8 29h1M53 32h1M54 33h1M9 35h1M55 35h1M56 36h1M56 37h1M10 38h1M56 38h1M56 39h1M11 40h1M12 43h1M60 43h1M12 44h1M60 44h1M12 45h1M12 46h2M13 47h1M61 47h1M13 48h2M62 48h1M14 49h3M63 49h2M15 50h3M64 50h2M15 51h3M16 52h3M16 53h3M71 53h1M16 54h3M72 54h2M16 55h3M73 55h1M17 56h3M73 56h2M17 57h5M73 57h2M18 58h6M73 58h2M18 59h18M73 59h2M19 60h18M73 60h2M21 61h17M74 61h1M22 62h9M36 62h3M74 62h2M24 63h6M37 63h2M74 63h2M38 64h2M74 64h2M38 65h2M74 65h2M39 66h2M74 66h2M39 67h2M75 67h1M40 68h1M75 68h2M40 69h2M75 69h2M41 70h1M76 70h1M41 71h1M76 71h2M41 72h2M77 72h1M42 73h1M77 73h1M42 74h1M42 75h1M42 76h1M42 77h1M79 77h1M42 78h1M79 78h1M42 79h1M42 80h1M80 80h1M42 81h1M80 81h1M42 82h1M81 82h1M42 83h1M81 83h2M42 84h1M42 85h1M42 86h1M42 87h1M84 87h2M42 88h1M84 88h3M42 89h1M85 89h3M42 90h1M87 90h2M42 91h1M88 91h2M42 92h1M89 92h2M41 93h2M90 93h1M41 94h2M90 94h2M41 95h2M91 95h2M42 96h1M91 96h2M42 97h1M91 97h2M43 98h1M90 98h3M43 99h1M90 99h3M43 100h1M89 100h4M43 101h1M89 101h4M43 102h1M89 102h2M43 103h1M43 104h1M43 105h1M98 105h2M43 106h1M100 106h1M43 107h1M100 107h1M43 108h1M101 108h1M43 109h1M101 109h1M43 110h1M101 110h2M43 111h1M102 111h1M102 112h1M102 113h2M103 114h1M44 116h1M44 117h1M44 118h1M94 119h1M93 120h2M93 121h2M109 121h2M79 122h5M92 122h3M109 122h3M77 123h9M91 123h3M109 123h4M74 124h13M91 124h3M109 124h4M72 125h7M83 125h5M90 125h3M72 126h4M84 126h9M71 127h4M85 127h8M71 128h4M78 128h4M86 128h7M71 129h4M77 129h6M86 129h7M72 130h11M86 130h7M72 131h12M86 131h8M46 132h1M73 132h21M46 133h1M74 133h5M89 133h5M46 134h1M75 134h4M89 134h5M46 135h1M75 135h4M89 135h5M46 136h1M76 136h3M89 136h6M46 137h1M77 137h18M46 138h1M78 138h17M79 139h4M87 139h7M45 140h1M79 140h4M87 140h6M44 141h1M78 141h5M86 141h5M77 142h12M77 143h11M76 144h12M76 145h11M75 146h2M81 146h6M75 147h2M82 147h6M75 148h2M82 148h6M75 149h2M83 149h5M74 150h2M83 150h5M43 151h1M73 151h2M84 151h3M43 152h1M72 152h2M43 153h1M71 153h2M43 154h1M71 154h1M43 155h1M70 155h1M43 156h1M69 156h1M43 157h1M69 157h1M43 158h1M68 158h1M43 159h1M68 159h1M67 160h1M67 161h1M66 162h1M66 163h1M66 164h1M66 165h1M66 166h1M66 167h1M66 168h2M67 169h2M68 170h2M68 171h2M69 172h1M69 173h2M69 174h2M44 175h1M69 175h2M45 177h1M72 178h1M47 179h1M72 179h2M48 180h1M56 180h2M51 181h8M57 182h3M68 182h2M74 182h1M58 183h3M67 183h8M60 184h2M65 184h10M62 185h13M64 186h11M71 187h4M73 188h1"/>
<path stroke="#ffa600" d="M13 14h1M7 15h1M15 18h1M6 20h1M16 20h1M7 25h1M20 25h2M26 26h2M33 27h2M44 28h6M55 34h1M56 35h1M57 38h1M57 39h1M57 40h1M11 41h1M11 42h1M60 42h1M11 43h1M11 44h1M11 45h1M11 46h1M61 46h1M12 47h1M62 47h1M12 48h1M63 48h2M12 49h2M65 49h1M13 50h2M13 51h2M13 52h3M71 52h2M14 53h2M72 53h2M14 54h2M74 54h1M15 55h1M74 55h1M15 56h2M75 56h1M16 57h1M16 58h2M16 59h2M17 60h2M17 61h4M17 62h5M31 62h5M76 62h2M17 63h7M30 63h7M76 63h2M18 64h20M76 64h1M18 65h15M36 65h2M76 65h1M19 66h13M37 66h2M76 66h1M22 67h9M37 67h2M76 67h2M27 68h3M38 68h2M77 68h1M39 69h1M77 69h1M39 70h2M77 70h1M40 71h1M40 72h1M78 72h1M40 73h2M78 73h1M41 74h1M79 74h1M41 75h1M79 75h1M41 76h1M79 76h1M40 77h2M80 77h1M40 78h2M80 78h1M40 79h2M80 79h1M40 80h2M81 80h1M40 81h2M81 81h1M40 82h2M82 82h1M40 83h2M83 83h1M40 84h2M41 85h1M41 86h1M85 86h2M41 87h1M86 87h1M41 88h1M87 88h2M40 89h2M88 89h2M40 90h2M89 90h1M40 91h2M90 91h1M39 92h3M91 92h1M39 93h2M91 93h2M39 94h2M92 94h1M39 95h2M93 95h1M40 96h2M93 96h1M40 97h2M93 97h1M40 98h3M93 98h1M41 99h2M93 99h2M42 100h1M93 100h2M35 101h2M42 101h1M93 101h2M34 102h4M42 102h1M34 103h4M42 103h1M33 104h6M42 104h1M100 104h1M33 105h6M41 105h2M100 105h1M33 106h10M101 106h1M33 107h10M101 107h1M33 108h10M102 108h1M34 109h9M102 109h1M34 110h5M42 110h1M103 110h1M35 111h3M103 111h1M43 112h1M103 112h2M43 113h1M104 113h1M43 114h1M106 116h3M106 117h6M106 118h7M44 119h1M107 119h7M44 120h1M107 120h7M44 121h1M97 121h8M107 121h2M111 121h4M44 122h1M95 122h4M102 122h3M107 122h2M112 122h3M44 123h1M94 123h3M104 123h2M107 123h2M113 123h3M94 124h2M105 124h1M108 124h1M113 124h3M79 125h4M93 125h3M108 125h7M76 126h8M93 126h3M108 126h6M45 127h1M75 127h10M93 127h3M75 128h3M82 128h4M93 128h3M75 129h2M83 129h3M93 129h4M83 130h3M93 130h4M84 131h2M94 131h3M94 132h4M94 133h4M94 134h4M94 135h4M95 136h4M95 137h4M107 137h1M113 137h1M95 138h4M107 138h1M113 138h1M94 139h4M107 139h1M113 139h1M93 140h5M91 141h6M43 142h1M89 142h6M88 143h6M88 144h3M87 145h3M87 146h3M81 147h1M88 147h2M81 148h1M88 148h3M81 149h2M88 149h2M76 150h7M88 150h2M75 151h3M81 151h3M87 151h2M74 152h2M82 152h7M73 153h2M83 153h5M72 154h2M84 154h3M71 155h2M70 156h2M70 157h1M69 158h1M69 159h1M43 160h1M68 160h1M43 161h1M43 162h1M67 162h1M43 163h1M67 163h1M43 164h1M67 164h1M43 165h1M67 165h1M67 166h1M67 167h1M68 168h1M69 169h1M70 170h1M70 171h1M70 172h2M71 173h1M71 174h1M71 175h2M74 177h1M73 178h3M50 181h1M75 181h2M54 182h3M75 182h2M55 183h3M75 183h2M56 184h4M75 184h2M58 185h4M75 185h2M60 186h4M75 186h2M62 187h9M75 187h2M64 188h9M74 188h3M66 189h11M68 190h9M69 191h7M70 192h5M136 192h1M71 193h4M136 193h2"/>
<path stroke="#ff9300" d="M14 15h1M6 21h1M17 22h1M18 24h1M22 25h1M28 26h2M35 27h1M53 31h1M54 32h1M55 33h1M56 34h1M9 36h1M57 36h1M57 37h1M10 39h1M58 40h1M59 41h1M61 44h1M10 45h1M61 45h1M62 46h1M11 47h1M63 47h2M11 48h1M65 48h1M11 49h1M11 50h2M11 51h2M12 52h1M73 52h1M12 53h2M74 53h1M13 54h1M14 55h1M14 56h1M76 56h1M15 57h1M15 58h1M15 59h1M15 60h2M16 61h1M16 62h1M78 62h1M16 63h1M78 63h1M16 64h2M77 64h2M16 65h2M33 65h3M77 65h1M16 66h3M32 66h5M77 66h2M17 67h5M31 67h6M78 67h1M17 68h10M30 68h8M78 68h1M17 69h16M37 69h2M78 69h1M17 70h4M26 70h6M38 70h1M17 71h3M29 71h1M38 71h2M18 72h1M39 72h1M39 73h1M79 73h1M40 74h1M80 74h1M40 75h1M80 75h1M40 76h1M80 76h1M39 77h1M39 78h1M81 78h1M38 79h2M81 79h1M38 80h2M82 80h1M38 81h2M82 81h1M38 82h2M83 82h1M38 83h2M39 84h1M39 85h2M86 85h1M39 86h2M87 86h1M38 87h3M87 87h2M38 88h3M89 88h1M38 89h2M90 89h1M38 90h2M90 90h1M37 91h3M91 91h1M37 92h2M92 92h1M37 93h2M93 93h1M37 94h2M93 94h1M37 95h2M94 95h1M37 96h3M94 96h1M36 97h4M94 97h1M34 98h6M94 98h2M33 99h8M95 99h1M33 100h9M95 100h2M32 101h3M37 101h5M32 102h2M38 102h4M32 103h2M38 103h4M31 104h2M39 104h3M101 104h1M31 105h2M39 105h2M101 105h1M31 106h2M102 106h1M30 107h3M102 107h1M30 108h3M103 108h1M31 109h3M103 109h2M31 110h3M39 110h3M104 110h1M32 111h3M38 111h5M104 111h2M33 112h10M105 112h3M34 113h9M105 113h3M34 114h6M35 115h4M43 115h1M35 116h4M43 116h1M114 116h1M35 117h3M43 117h1M112 117h3M36 118h1M113 118h3M114 119h2M114 120h2M115 121h2M99 122h3M115 122h2M97 123h7M116 123h1M44 124h1M96 124h9M116 124h1M44 125h1M96 125h10M115 125h2M96 126h10M114 126h2M96 127h10M109 127h6M45 128h1M96 128h10M110 128h4M97 129h6M111 129h2M97 130h6M97 131h6M111 131h1M98 132h5M105 132h2M98 133h9M113 133h1M98 134h9M113 134h2M98 135h10M113 135h2M99 136h9M113 136h2M99 137h8M114 137h2M99 138h8M114 138h2M45 139h1M98 139h9M114 139h2M98 140h10M114 140h2M97 141h4M107 141h2M114 141h1M95 142h3M94 143h3M91 144h5M90 145h5M90 146h4M90 147h3M91 148h2M90 149h2M90 150h2M78 151h3M89 151h2M76 152h6M89 152h2M75 153h8M88 153h2M74 154h2M81 154h3M87 154h3M73 155h2M82 155h7M72 156h2M83 156h5M71 157h2M85 157h1M70 158h2M70 159h1M69 160h1M68 161h1M68 162h1M43 166h1M68 166h1M43 167h1M68 167h1M43 168h1M69 168h1M43 169h1M70 169h1M43 170h1M71 170h1M43 171h1M71 171h2M43 172h1M72 172h1M43 173h1M72 173h2M72 174h2M73 175h3M44 176h1M75 176h1M75 177h2M46 179h1M77 180h1M49 181h1M77 181h1M52 182h2M77 182h1M53 183h2M77 183h2M54 184h2M77 184h2M55 185h3M77 185h2M57 186h3M77 186h2M59 187h3M77 187h2M60 188h4M77 188h2M62 189h4M77 189h2M63 190h5M77 190h2M64 191h5M76 191h3M136 191h1M65 192h5M75 192h3M66 193h5M75 193h3M117 193h5M128 193h4"/>
<path stroke="#ff8000" d="M15 17h1M6 22h1M23 25h2M7 26h1M30 26h1M36 27h1M51 28h1M7 30h1M7 31h1M7 32h1M55 32h1M57 35h1M58 37h1M58 38h1M58 39h1M10 40h1M10 42h1M10 43h1M61 43h1M10 44h1M62 45h1M10 46h1M63 46h1M10 47h1M65 47h1M10 48h1M10 49h1M10 50h1M10 51h1M11 52h1M74 52h1M11 53h1M11 54h2M12 55h2M13 56h1M77 56h2M14 57h1M14 58h1M15 61h1M15 62h1M79 62h1M15 63h1M79 63h1M15 64h1M79 64h1M15 65h1M78 65h1M79 66h1M16 67h1M79 67h1M16 68h1M79 68h1M16 69h1M33 69h4M16 70h1M21 70h5M32 70h6M16 71h1M20 71h2M25 71h4M30 71h3M37 71h1M17 72h1M19 72h2M27 72h5M38 72h1M17 73h3M28 73h3M38 73h1M80 73h1M17 74h3M29 74h1M39 74h1M18 75h2M39 75h1M81 75h1M18 76h1M38 76h2M81 76h1M38 77h1M81 77h1M37 78h2M82 78h1M36 79h2M82 79h1M35 80h3M83 80h1M35 81h3M83 81h2M36 82h2M36 83h2M36 84h3M36 85h3M87 85h1M36 86h3M88 86h1M36 87h2M89 87h1M35 88h3M90 88h1M35 89h3M35 90h3M91 90h1M34 91h3M92 91h1M34 92h3M93 92h1M34 93h3M34 94h3M94 94h1M34 95h3M95 95h1M33 96h4M95 96h1M33 97h3M95 97h1M32 98h2M96 98h1M31 99h2M96 99h1M31 100h2M97 100h2M31 101h1M30 102h2M30 103h2M30 104h1M102 104h1M29 105h2M102 105h1M29 106h2M103 106h1M29 107h1M103 107h2M28 108h2M104 108h2M28 109h3M105 109h2M29 110h2M105 110h3M114 110h1M29 111h3M106 111h2M31 112h2M32 113h2M33 114h1M40 114h3M33 115h2M39 115h4M33 116h2M39 116h4M115 116h2M34 117h1M38 117h4M115 117h2M34 118h2M37 118h4M43 118h1M116 118h1M34 119h6M43 119h1M116 119h2M34 120h6M43 120h1M116 120h2M34 121h6M117 121h1M35 122h5M117 122h1M35 123h4M117 123h1M36 124h3M117 124h1M117 125h1M44 126h1M116 126h1M115 127h2M114 128h2M45 129h1M103 129h3M113 129h3M45 130h1M103 130h3M111 130h4M103 131h3M112 131h3M103 132h2M113 132h3M114 133h2M115 134h1M115 135h1M115 136h2M116 137h1M116 138h1M116 139h1M44 140h1M116 140h1M43 141h1M101 141h6M115 141h1M98 142h11M115 142h1M42 143h1M97 143h3M108 143h2M42 144h1M96 144h2M42 145h1M95 145h2M42 146h1M94 146h2M42 147h1M93 147h2M93 148h1M92 149h2M92 150h1M91 151h2M91 152h1M90 153h2M76 154h5M90 154h1M75 155h7M89 155h2M74 156h3M79 156h4M88 156h2M73 157h2M81 157h4M86 157h3M72 158h2M82 158h6M71 159h2M70 160h1M69 161h2M69 162h1M68 163h1M68 164h1M68 165h1M69 166h1M69 167h2M70 168h2M71 169h2M72 170h1M73 171h1M73 172h2M74 173h2M43 174h1M74 174h3M76 175h2M76 176h2M77 177h1M45 178h1M47 180h1M78 180h2M48 181h1M78 181h2M50 182h2M78 182h2M52 183h1M79 183h2M53 184h1M79 184h2M54 185h1M79 185h2M55 186h2M79 186h2M56 187h3M79 187h2M58 188h2M79 188h2M60 189h2M79 189h2M61 190h2M79 190h3M135 190h2M62 191h2M79 191h3M131 191h1M63 192h2M78 192h4M115 192h10M128 192h4M63 193h3M78 193h4M115 193h2M122 193h3"/>
<path stroke="#ff6c00" d="M5 17h1M16 19h1M18 23h1M19 24h2M25 25h1M31 26h2M37 27h2M7 29h1M54 31h1M56 33h1M57 34h1M58 36h1M9 37h1M59 38h1M59 39h1M59 40h1M10 41h1M60 41h1M61 42h1M9 44h1M62 44h1M9 45h1M63 45h1M9 46h1M64 46h2M9 47h1M9 48h1M9 49h1M74 51h1M10 52h1M10 53h1M10 54h1M11 55h1M12 56h1M79 56h1M13 57h1M14 59h1M14 60h1M14 61h1M14 62h1M80 62h1M80 63h1M79 65h1M15 66h1M15 67h1M80 67h1M15 68h1M80 68h1M15 69h1M22 71h3M33 71h4M16 72h1M21 72h6M32 72h6M16 73h1M20 73h1M26 73h2M31 73h2M37 73h1M81 73h1M16 74h1M20 74h1M27 74h2M30 74h3M37 74h2M81 74h1M17 75h1M20 75h1M27 75h5M37 75h2M82 75h1M17 76h1M19 76h2M27 76h6M37 76h1M82 76h1M17 77h4M26 77h8M36 77h2M82 77h1M18 78h3M26 78h11M83 78h1M18 79h4M25 79h11M83 79h1M19 80h3M24 80h11M84 80h1M24 81h11M85 81h1M24 82h12M24 83h3M33 83h3M24 84h3M34 84h2M87 84h1M24 85h3M34 85h2M88 85h1M24 86h3M34 86h2M89 86h1M24 87h4M33 87h3M90 87h1M24 88h4M32 88h3M24 89h4M31 89h4M91 89h1M24 90h4M31 90h4M92 90h1M31 91h3M93 91h1M31 92h3M94 92h1M31 93h3M94 93h1M31 94h3M31 95h3M30 96h3M96 96h1M30 97h3M96 97h1M30 98h2M97 98h1M29 99h2M97 99h2M29 100h2M99 100h1M29 101h2M29 102h1M28 103h2M28 104h2M103 104h1M27 105h2M103 105h2M27 106h2M104 106h1M27 107h2M105 107h1M114 107h4M26 108h2M114 108h4M26 109h2M114 109h3M26 110h3M115 110h2M27 111h2M28 112h3M29 113h3M30 114h3M31 115h2M116 115h2M32 116h1M117 116h1M32 117h2M42 117h1M117 117h1M33 118h1M41 118h2M117 118h2M33 119h1M40 119h3M118 119h1M33 120h1M40 120h3M118 120h1M33 121h1M40 121h2M43 121h1M118 121h1M34 122h1M40 122h1M43 122h1M118 122h2M34 123h1M39 123h2M43 123h1M118 123h2M34 124h2M39 124h1M43 124h1M118 124h1M36 125h3M118 125h1M117 126h2M44 127h1M117 127h1M116 128h1M116 129h1M115 130h2M45 131h1M115 131h2M45 132h1M116 132h1M45 133h1M116 133h1M45 134h1M116 134h1M45 135h1M116 135h1M45 136h1M117 136h1M45 137h1M117 137h1M45 138h1M117 138h1M117 139h1M43 140h1M117 140h1M116 141h1M42 142h1M116 142h1M100 143h8M115 143h2M98 144h3M108 144h2M97 145h2M96 146h1M95 147h1M42 148h1M94 148h2M42 149h1M94 149h1M42 150h1M93 150h1M42 151h1M93 151h1M42 152h1M92 152h1M42 153h1M92 153h1M42 154h1M91 154h2M42 155h1M91 155h1M77 156h2M90 156h2M75 157h6M89 157h2M74 158h8M88 158h2M73 159h2M80 159h9M71 160h2M83 160h4M71 161h1M70 162h1M69 163h1M69 164h1M69 165h1M70 166h1M71 167h1M72 168h1M73 169h1M73 170h2M74 171h2M75 172h2M76 173h2M77 174h2M43 175h1M78 175h1M78 176h2M44 177h1M78 177h2M79 178h2M79 179h3M80 180h4M80 181h5M49 182h1M80 182h4M51 183h1M81 183h2M51 184h2M81 184h2M52 185h2M81 185h2M53 186h2M81 186h2M54 187h2M81 187h3M56 188h2M81 188h3M57 189h3M81 189h3M135 189h2M59 190h2M82 190h2M116 190h6M132 190h3M60 191h2M82 191h2M115 191h10M128 191h3M61 192h2M82 192h3M114 192h1M61 193h2M82 193h3M114 193h1"/>
<path stroke="#ff5900" d="M5 18h1M6 23h1M21 24h1M26 25h2M33 26h1M7 27h1M39 27h3M7 28h1M52 29h1M53 30h1M58 35h1M59 37h1M9 38h1M60 39h1M60 40h1M61 41h1M9 43h1M62 43h1M63 44h1M64 45h1M66 46h1M9 50h1M74 50h1M9 51h1M9 52h1M9 53h1M10 55h1M11 56h1M80 56h1M12 57h1M13 58h1M82 58h1M13 59h1M82 59h1M82 60h1M82 61h1M81 62h1M14 63h1M81 63h1M14 64h1M80 64h1M14 65h1M80 65h1M14 66h1M80 66h1M81 68h1M81 69h1M15 70h1M15 71h1M15 72h1M21 73h5M33 73h4M21 74h1M24 74h3M33 74h4M82 74h1M16 75h1M21 75h1M25 75h2M32 75h5M16 76h1M21 76h1M25 76h2M33 76h4M83 76h1M21 77h5M34 77h2M83 77h1M17 78h1M21 78h5M17 79h1M22 79h3M84 79h1M18 80h1M22 80h2M85 80h1M19 81h5M86 81h1M20 82h4M87 82h1M22 83h2M27 83h6M87 83h1M22 84h2M27 84h7M88 84h1M22 85h2M27 85h7M89 85h1M22 86h2M27 86h7M90 86h1M22 87h2M28 87h5M23 88h1M28 88h4M91 88h1M23 89h1M28 89h3M92 89h1M23 90h1M28 90h3M93 90h1M23 91h8M94 91h1M23 92h8M24 93h7M25 94h6M26 95h5M27 96h3M27 97h3M97 97h1M27 98h3M98 98h1M27 99h2M99 99h1M27 100h2M100 100h1M27 101h2M27 102h2M27 103h1M26 104h2M104 104h1M25 105h2M105 105h1M115 105h4M25 106h2M105 106h1M114 106h6M24 107h3M118 107h3M24 108h2M118 108h2M24 109h2M117 109h2M24 110h2M117 110h1M24 111h3M24 112h4M24 113h5M24 114h6M23 115h4M28 115h3M118 115h1M23 116h4M30 116h2M118 116h1M23 117h4M31 117h1M118 117h1M23 118h3M31 118h2M119 118h1M23 119h3M32 119h1M119 119h1M23 120h3M32 120h1M119 120h1M23 121h2M32 121h1M42 121h1M119 121h1M23 122h1M33 122h1M41 122h2M120 122h1M33 123h1M41 123h2M120 123h1M33 124h1M40 124h3M119 124h2M34 125h2M39 125h2M43 125h1M119 125h1M36 126h4M43 126h1M119 126h1M118 127h1M44 128h1M117 128h1M117 129h1M117 130h1M117 131h1M117 132h1M117 133h1M117 134h1M117 135h2M118 136h1M118 137h1M124 137h1M118 138h1M123 138h4M44 139h1M118 139h1M123 139h4M118 140h1M124 140h2M42 141h1M117 141h2M117 142h1M117 143h1M101 144h7M116 144h1M99 145h3M107 145h4M97 146h2M96 147h2M96 148h1M95 149h1M94 150h2M94 151h1M93 152h2M93 153h1M93 154h1M92 155h1M42 156h1M92 156h1M42 157h1M91 157h1M42 158h1M90 158h2M42 159h1M75 159h5M89 159h2M42 160h1M73 160h10M87 160h3M42 161h1M72 161h2M83 161h4M71 162h2M70 163h2M70 164h1M70 165h1M71 166h1M72 167h1M73 168h1M74 169h1M75 170h2M76 171h2M77 172h2M78 173h2M79 174h2M79 175h2M80 176h1M85 176h2M80 177h1M85 177h3M81 178h8M45 179h1M82 179h8M46 180h1M84 180h6M47 181h1M85 181h5M87 182h2M50 183h1M50 184h1M51 185h1M52 186h1M53 187h1M54 188h2M84 188h1M134 188h3M56 189h1M84 189h3M116 189h10M132 189h3M57 190h2M84 190h3M114 190h2M122 190h10M58 191h2M84 191h3M114 191h1M59 192h2M85 192h2M59 193h2M85 193h2M113 193h1"/>
<path stroke="#ff4600" d="M14 14h1M15 16h1M16 18h1M18 22h1M22 24h1M28 25h1M34 26h1M42 27h5M55 31h1M56 32h1M57 33h1M58 34h1M59 36h1M60 38h1M9 39h1M61 40h1M9 42h1M62 42h1M63 43h1M64 44h1M8 45h1M65 45h2M8 46h1M67 46h1M8 47h1M8 48h1M8 49h1M8 50h1M75 50h1M8 51h1M8 52h1M9 54h1M81 56h1M82 57h1M12 58h1M83 58h1M83 59h1M13 60h1M83 60h1M13 61h1M83 61h1M82 62h1M82 63h1M81 64h1M81 65h1M81 66h1M14 67h1M81 67h1M14 68h1M14 69h1M82 69h1M82 70h1M15 73h1M83 73h1M15 74h1M22 74h2M83 74h1M22 75h3M83 75h1M22 76h3M16 77h1M84 77h1M16 78h1M84 78h1M85 79h1M17 80h1M18 81h1M87 81h1M18 82h2M19 83h3M88 83h1M20 84h2M89 84h1M21 85h1M90 85h1M21 86h1M21 87h1M91 87h1M21 88h2M92 88h1M21 89h2M93 89h1M21 90h2M94 90h1M21 91h2M21 92h2M21 93h3M22 94h3M22 95h4M23 96h4M24 97h3M98 97h1M25 98h2M99 98h1M26 99h1M100 99h1M26 100h1M25 101h2M25 102h2M24 103h3M23 104h3M105 104h1M113 104h6M22 105h3M114 105h1M119 105h1M22 106h3M22 107h2M121 107h1M22 108h2M120 108h1M22 109h2M119 109h1M22 110h2M118 110h1M21 111h3M21 112h3M21 113h3M21 114h3M118 114h1M21 115h2M27 115h1M119 115h1M21 116h2M27 116h3M119 116h1M21 117h2M27 117h4M119 117h1M21 118h2M26 118h5M120 118h1M21 119h2M26 119h3M30 119h2M120 119h1M21 120h2M26 120h2M31 120h1M120 120h1M21 121h2M25 121h2M31 121h1M120 121h1M21 122h2M24 122h2M31 122h2M121 122h1M21 123h4M32 123h1M121 123h1M22 124h2M32 124h1M121 124h1M33 125h1M41 125h2M120 125h1M34 126h2M40 126h3M120 126h1M37 127h7M119 127h1M43 128h1M118 128h2M43 129h2M118 129h1M118 130h1M118 131h1M118 132h1M118 133h2M118 134h2M119 135h6M119 136h8M119 137h5M125 137h3M119 138h4M127 138h1M43 139h1M119 139h4M127 139h1M42 140h1M119 140h5M126 140h6M119 141h1M123 141h9M118 142h1M130 142h1M118 143h1M117 144h1M102 145h5M116 145h1M99 146h3M108 146h3M98 147h1M97 148h1M96 149h1M96 150h1M95 151h2M95 152h1M94 153h2M94 154h2M93 155h2M93 156h2M92 157h2M92 158h1M91 159h2M90 160h1M74 161h9M87 161h3M42 162h1M73 162h1M83 162h3M42 163h1M72 163h1M42 164h1M71 164h2M42 165h1M71 165h2M42 166h1M72 166h1M73 167h1M74 168h2M75 169h3M77 170h3M78 171h3M79 172h7M80 173h8M85 174h4M85 175h5M43 176h1M87 176h4M88 177h2M44 178h1M89 178h1M90 179h1M90 180h2M90 181h2M48 182h1M89 182h3M49 183h1M88 183h3M49 184h1M89 184h2M50 185h1M51 186h1M136 186h2M52 187h1M134 187h3M53 188h1M115 188h13M131 188h3M54 189h2M114 189h2M126 189h6M55 190h2M56 191h2M113 191h1M57 192h2M87 192h2M113 192h1M58 193h1M87 193h2"/>
<path stroke="#ff3300" d="M11 13h1M5 16h1M5 19h1M19 23h1M6 24h1M23 24h2M29 25h2M35 26h1M47 27h4M54 30h1M57 32h1M8 33h1M8 34h1M59 35h1M60 36h1M60 37h1M61 39h1M9 40h1M9 41h1M62 41h1M63 42h1M64 43h1M8 44h1M65 44h1M67 45h1M68 46h2M74 49h1M76 50h1M8 53h1M8 54h1M9 55h1M10 56h1M11 57h1M12 59h1M84 59h1M84 60h1M84 61h1M13 62h1M83 62h1M13 63h1M13 64h1M82 64h1M13 65h1M82 65h1M82 66h1M82 67h1M82 68h1M14 70h1M14 71h1M14 72h1M84 74h1M15 75h1M84 75h1M15 76h1M84 76h1M85 77h1M85 78h1M16 79h1M16 80h1M17 81h1M88 81h1M17 82h1M88 82h1M18 83h1M89 83h1M19 84h1M90 84h1M19 85h2M20 86h1M91 86h1M20 87h1M92 87h1M20 88h1M93 88h1M20 89h1M94 89h1M20 90h1M20 91h1M95 91h1M20 92h1M20 93h1M20 94h2M20 95h2M20 96h3M21 97h3M99 97h1M21 98h4M100 98h1M21 99h5M101 99h2M21 100h5M21 101h4M21 102h4M113 102h4M21 103h3M112 103h7M20 104h3M119 104h1M20 105h2M20 106h2M20 107h2M122 107h1M20 108h2M121 108h1M20 109h2M20 110h2M20 111h1M20 112h1M20 113h1M119 113h1M20 114h1M119 114h1M20 115h1M20 116h1M20 117h1M20 118h1M20 119h1M29 119h1M121 119h1M20 120h1M28 120h3M121 120h1M20 121h1M27 121h4M121 121h1M20 122h1M26 122h5M122 122h1M20 123h1M25 123h2M30 123h2M122 123h1M21 124h1M24 124h2M31 124h1M122 124h1M22 125h2M32 125h1M121 125h1M33 126h1M121 126h1M35 127h2M120 127h1M38 128h5M120 128h1M41 129h2M119 129h1M119 130h1M119 131h2M119 132h3M120 133h5M120 134h7M125 135h3M127 136h1M43 137h2M44 138h1M133 138h2M42 139h1M133 139h3M132 140h5M120 141h3M132 141h5M41 142h1M119 142h11M131 142h6M41 143h1M119 143h1M127 143h9M41 144h1M118 144h1M130 144h2M41 145h1M117 145h1M41 146h1M102 146h6M116 146h1M41 147h1M99 147h3M108 147h3M98 148h2M97 149h2M97 150h1M97 151h1M96 152h2M96 153h2M96 154h2M95 155h2M95 156h2M94 157h2M93 158h2M93 159h1M91 160h2M90 161h2M74 162h9M86 162h4M73 163h2M83 163h2M73 164h1M73 165h1M73 166h2M42 167h1M74 167h3M42 168h1M76 168h4M42 169h1M78 169h7M42 170h1M80 170h9M42 171h1M81 171h8M42 172h1M86 172h3M42 173h1M88 173h3M89 174h2M90 175h1M92 180h2M46 181h1M92 181h2M47 182h1M92 182h2M48 183h1M91 183h2M48 184h1M91 184h2M49 185h1M90 185h3M49 186h2M91 186h1M133 186h3M50 187h2M114 187h1M124 187h3M131 187h3M51 188h2M114 188h1M128 188h3M52 189h2M113 189h1M54 190h1M113 190h1M55 191h1M56 192h1M89 192h1M112 192h1M56 193h2M89 193h1M112 193h1"/>
<path stroke="#ff2000" d="M10 13h1M12 13h1M8 14h1M6 15h1M5 20h1M25 24h1M6 25h1M31 25h1M36 26h1M6 30h1M55 30h1M6 31h1M56 31h1M6 32h1M58 33h1M59 34h1M8 35h1M60 35h1M8 36h1M61 37h1M61 38h1M63 41h1M64 42h1M8 43h1M65 43h1M66 44h2M68 45h1M7 46h1M70 46h1M7 47h1M7 48h1M74 48h1M7 49h1M75 49h1M7 50h1M7 51h1M7 52h1M8 55h1M9 56h1M10 57h1M11 58h1M84 58h1M85 59h1M12 60h1M85 60h1M85 61h1M84 62h1M83 63h1M83 64h1M83 65h1M13 66h1M13 67h1M83 67h1M13 68h1M83 68h1M83 69h1M84 72h1M14 73h1M84 73h1M14 74h1M85 75h1M85 76h1M15 77h1M86 77h1M15 78h1M86 78h1M16 81h1M89 81h1M16 82h1M89 82h1M17 83h1M90 83h1M17 84h2M18 85h1M91 85h1M18 86h2M92 86h1M19 87h1M93 87h1M19 88h1M94 88h1M19 89h1M19 90h1M95 90h1M19 91h1M96 91h1M18 92h2M18 93h2M18 94h2M18 95h2M18 96h2M19 97h2M100 97h1M19 98h2M101 98h2M19 99h2M103 99h1M19 100h2M19 101h2M112 101h5M19 102h2M112 102h1M117 102h2M19 103h2M119 103h1M19 104h1M19 105h1M19 106h1M19 107h1M19 108h1M122 108h1M19 109h1M19 110h1M19 111h1M19 112h1M19 113h1M19 114h1M19 115h1M19 116h1M19 117h1M19 118h1M19 119h1M19 120h1M122 120h1M19 121h1M122 121h1M19 122h1M19 123h1M27 123h3M123 123h1M20 124h1M26 124h5M123 124h1M21 125h1M24 125h2M31 125h1M122 125h2M32 126h1M122 126h1M33 127h2M121 127h2M36 128h2M121 128h1M38 129h3M120 129h2M120 130h3M121 131h3M122 132h5M125 133h5M127 134h1M133 135h1M133 136h2M42 137h1M133 137h4M42 138h2M135 138h3M41 139h1M136 139h2M41 140h1M137 140h1M41 141h1M137 141h1M137 142h1M120 143h7M136 143h2M119 144h2M125 144h5M132 144h6M118 145h2M130 145h3M117 146h1M102 147h6M116 147h1M41 148h1M100 148h2M108 148h3M41 149h1M99 149h1M41 150h1M98 150h1M41 151h1M98 151h1M41 152h1M98 152h1M41 153h1M98 153h1M41 154h1M98 154h1M97 155h2M97 156h2M96 157h3M95 158h3M94 159h3M93 160h2M92 161h2M90 162h2M75 163h8M85 163h5M74 164h13M74 165h4M75 166h6M77 167h10M80 168h9M85 169h6M89 170h3M91 173h3M42 174h1M93 174h1M43 177h1M95 179h1M45 180h1M94 180h2M94 181h2M94 182h1M47 183h1M93 183h2M47 184h1M93 184h2M134 184h1M48 185h1M93 185h1M132 185h3M48 186h1M92 186h2M114 186h1M125 186h2M131 186h2M49 187h1M92 187h2M113 187h1M123 187h1M50 188h1M113 188h1M51 189h1M112 189h1M52 190h2M112 190h1M53 191h2M112 191h1M54 192h2M55 193h1"/>
<path stroke="#ff0d00" d="M15 15h1M16 17h1M5 21h1M19 22h1M26 24h2M32 25h1M37 26h2M6 28h1M6 29h1M57 31h1M58 32h1M59 33h1M61 36h1M64 41h1M8 42h1M65 42h1M66 43h1M7 44h1M68 44h1M7 45h1M69 45h2M71 46h2M74 47h1M75 48h1M76 49h1M77 50h1M7 53h1M7 54h1M85 58h1M11 59h1M86 60h1M12 61h1M12 62h1M85 62h1M12 63h1M84 63h1M84 64h1M83 66h1M84 67h1M84 68h1M13 69h1M13 70h1M13 71h1M85 71h1M85 72h1M85 73h1M85 74h1M14 75h1M86 75h1M14 76h1M86 76h1M15 79h1M15 80h1M15 81h1M90 81h1M90 82h1M16 83h1M91 83h1M16 84h1M91 84h1M17 85h1M92 85h1M17 86h1M93 86h1M17 87h2M94 87h1M17 88h2M95 88h1M17 89h2M95 89h1M17 90h2M96 90h1M17 91h2M97 91h1M17 92h1M98 92h1M17 93h1M17 94h1M99 94h1M17 95h1M17 96h1M100 96h2M17 97h2M101 97h2M17 98h2M103 98h2M17 99h2M18 100h1M112 100h5M18 101h1M117 101h2M18 102h1M119 102h1M18 103h1M18 104h1M18 105h1M18 106h1M18 107h1M18 108h1M18 109h1M18 110h1M18 111h1M18 112h1M18 113h1M18 114h1M18 115h1M18 116h1M18 117h1M18 118h1M18 119h1M18 120h1M123 120h1M18 121h1M123 121h1M18 122h1M123 122h1M18 123h1M124 123h1M19 124h1M124 124h1M20 125h1M26 125h5M124 125h1M21 126h5M30 126h2M123 126h2M32 127h1M123 127h2M34 128h2M122 128h4M36 129h2M122 129h6M123 130h7M124 131h7M127 132h6M130 133h4M133 134h2M134 135h3M135 136h3M40 137h2M137 137h1M40 138h2M40 139h1M40 140h1M121 144h4M120 145h10M133 145h5M118 146h2M117 147h2M102 148h6M116 148h2M100 149h2M108 149h8M99 150h2M110 150h5M99 151h2M99 152h2M99 153h2M99 154h2M41 155h1M99 155h2M41 156h1M99 156h2M41 157h1M99 157h2M41 158h1M98 158h3M41 159h1M97 159h3M41 160h1M95 160h5M94 161h4M92 162h3M90 163h3M87 164h4M78 165h12M81 166h9M87 167h5M89 168h4M91 169h3M92 170h3M93 171h1M93 172h1M94 173h2M94 174h2M42 175h1M95 175h1M96 176h1M96 177h1M96 178h1M44 179h1M96 179h1M96 180h1M45 181h1M96 181h1M46 182h1M95 182h2M136 182h2M46 183h1M95 183h2M133 183h5M46 184h1M95 184h1M131 184h3M47 185h1M94 185h2M113 185h2M125 185h2M131 185h1M47 186h1M94 186h2M112 186h2M123 186h2M48 187h1M94 187h1M112 187h1M48 188h2M93 188h2M112 188h1M49 189h2M93 189h2M50 190h2M93 190h2M111 190h1M51 191h2M94 191h1M111 191h1M52 192h2M94 192h1M111 192h1M53 193h2M94 193h1M111 193h1"/>
<path stroke="#ff0008" d="M9 13h1M13 13h1M23 23h1M28 24h1M33 25h1M6 26h1M39 26h2M6 27h1M51 27h1M53 29h2M56 30h1M60 34h1M61 35h1M8 41h1M65 41h1M66 42h1M7 43h1M67 43h2M69 44h1M73 46h1M6 47h1M75 47h1M6 48h1M76 48h1M6 49h1M77 49h1M6 50h1M78 50h1M6 51h1M6 52h1M7 55h1M8 56h1M9 57h1M10 58h1M86 59h1M11 60h1M87 60h1M86 61h1M86 62h1M85 63h2M12 64h1M85 64h1M12 65h1M84 65h1M12 66h1M84 66h1M85 68h1M86 71h1M13 72h1M86 72h1M13 73h1M86 73h1M86 74h1M87 75h1M87 76h1M14 77h1M14 78h1M14 79h1M90 79h1M90 80h1M91 81h1M15 82h1M91 82h1M15 83h1M92 83h1M15 84h1M92 84h1M16 85h1M93 85h1M16 86h1M94 86h1M16 87h1M95 87h1M16 88h1M96 88h1M16 89h1M96 89h1M16 90h1M97 90h1M16 91h1M98 91h1M16 92h1M99 92h1M16 93h1M99 93h1M16 94h1M100 94h1M16 95h1M100 95h2M16 96h1M102 96h1M16 97h1M103 97h2M16 98h1M105 98h2M113 98h2M111 99h6M17 100h1M117 100h2M17 101h1M119 101h1M17 102h1M17 103h1M17 104h1M17 105h1M17 106h1M17 107h1M17 108h1M17 109h1M17 110h1M17 111h1M17 112h1M17 113h1M17 114h1M17 115h1M17 116h1M17 117h1M17 118h1M17 119h1M124 119h1M17 120h1M124 120h1M17 121h1M124 121h1M17 122h1M124 122h1M125 123h1M18 124h1M125 124h2M19 125h1M125 125h5M20 126h1M26 126h4M125 126h6M23 127h1M30 127h2M125 127h6M32 128h2M126 128h6M34 129h2M128 129h4M130 130h3M131 131h3M133 132h2M134 133h3M135 134h3M137 135h1M38 137h2M39 138h1M39 139h1M39 140h1M40 141h1M40 142h1M40 143h1M40 144h1M40 145h1M120 146h18M119 147h3M118 148h2M102 149h6M116 149h2M101 150h3M106 150h4M115 150h2M101 151h2M107 151h10M101 152h2M108 152h8M101 153h2M108 153h8M101 154h2M108 154h2M101 155h2M108 155h2M101 156h2M101 157h3M101 158h2M100 159h3M100 160h2M41 161h1M98 161h3M41 162h1M95 162h5M41 163h1M93 163h6M41 164h1M91 164h6M41 165h1M90 165h6M90 166h6M92 167h5M93 168h5M94 169h4M133 169h5M95 170h3M137 170h1M137 171h1M137 172h1M137 173h1M42 176h1M97 176h2M97 177h2M43 178h1M97 178h2M97 179h2M97 180h1M97 181h1M135 181h3M45 182h1M97 182h1M132 182h4M45 183h1M97 183h1M114 183h3M129 183h4M45 184h1M96 184h2M112 184h3M126 184h1M46 185h1M96 185h1M112 185h1M123 185h2M46 186h1M96 186h1M111 186h1M46 187h2M95 187h2M111 187h1M46 188h2M95 188h2M111 188h1M47 189h2M95 189h1M111 189h1M47 190h3M95 190h1M47 191h4M95 191h1M48 192h4M95 192h1M49 193h4M95 193h1"/>
<path stroke="#ff0020" d="M15 14h1M16 16h1M5 22h1M24 23h1M29 24h2M34 25h1M41 26h4M52 28h1M57 30h1M58 31h1M59 32h1M60 33h1M61 34h1M62 36h1M8 40h1M66 41h1M67 42h2M69 43h1M70 44h1M6 45h1M6 46h1M74 46h2M76 47h1M77 48h1M78 49h1M79 50h1M6 53h1M6 54h1M7 56h1M8 57h1M9 58h1M10 59h1M88 60h1M11 61h1M87 61h2M11 62h1M87 62h1M12 67h1M12 68h1M86 68h1M12 69h1M86 69h2M86 70h2M87 71h1M87 72h1M87 73h1M13 74h1M87 74h2M13 75h1M88 75h1M13 76h1M91 79h1M14 80h1M91 80h2M14 81h1M92 81h1M14 82h1M92 82h1M14 83h1M93 83h1M93 84h2M15 85h1M94 85h1M15 86h1M95 86h1M15 87h1M96 87h1M15 88h1M97 88h1M15 89h1M97 89h2M15 90h1M98 90h2M15 91h1M99 91h1M100 92h1M100 93h1M101 94h1M102 95h1M103 96h2M105 97h3M112 97h3M111 98h2M115 98h3M16 99h1M117 99h2M16 100h1M119 100h1M16 101h1M16 102h1M16 103h1M16 104h1M16 105h1M16 106h1M16 107h1M16 108h1M16 109h1M16 110h1M16 111h1M16 112h1M16 113h1M16 114h1M16 115h1M16 116h1M16 117h1M16 118h1M16 119h1M16 120h1M125 120h1M16 121h1M125 121h1M125 122h2M17 123h1M126 123h2M17 124h1M127 124h4M18 125h1M130 125h2M19 126h1M131 126h2M21 127h2M24 127h6M131 127h3M30 128h2M132 128h2M32 129h2M132 129h3M133 130h3M134 131h3M135 132h3M137 133h1M37 137h1M37 138h2M37 139h2M38 140h1M38 141h2M39 142h1M39 143h1M40 146h1M40 147h1M122 147h4M128 147h10M40 148h1M120 148h3M40 149h1M118 149h3M40 150h1M104 150h2M117 150h3M40 151h1M103 151h4M117 151h2M40 152h1M103 152h5M116 152h3M103 153h5M116 153h2M103 154h5M103 155h5M103 156h7M104 157h6M103 158h14M103 159h14M102 160h15M101 161h3M110 161h7M100 162h3M112 162h6M99 163h3M113 163h6M97 164h4M114 164h7M96 165h5M115 165h9M41 166h1M96 166h5M118 166h6M41 167h1M97 167h3M119 167h5M132 167h6M41 168h1M98 168h2M119 168h5M132 168h6M41 169h1M98 169h2M120 169h4M41 170h1M98 170h3M121 170h3M41 171h1M99 171h1M123 171h1M41 172h1M99 172h1M99 173h1M99 174h1M137 174h1M99 175h1M131 175h7M99 176h1M134 176h4M99 177h1M134 177h4M99 178h1M135 178h3M99 179h1M134 179h4M44 180h1M98 180h2M134 180h4M44 181h1M98 181h2M131 181h4M44 182h1M98 182h1M113 182h4M128 182h4M44 183h1M98 183h1M112 183h2M117 183h2M126 183h3M44 184h1M98 184h1M111 184h1M123 184h3M44 185h2M97 185h2M111 185h1M44 186h2M97 186h2M44 187h2M97 187h1M110 187h1M44 188h2M97 188h1M110 188h1M44 189h3M96 189h2M110 189h1M44 190h3M96 190h2M110 190h1M44 191h3M96 191h2M110 191h1M44 192h4M96 192h2M110 192h1M44 193h5M96 193h1"/>
<path stroke="#ff0038" d="M14 13h1M4 17h1M4 18h1M5 23h1M25 23h2M31 24h1M35 25h1M45 26h3M55 29h1M59 31h1M60 32h1M61 33h1M62 35h1M63 36h1M67 40h1M67 41h2M7 42h1M69 42h1M70 43h2M6 44h1M74 45h2M76 46h1M77 47h1M5 48h1M78 48h1M5 49h1M79 49h1M5 50h1M80 50h1M5 51h1M6 55h1M10 60h1M89 60h1M89 61h1M88 62h2M11 63h1M89 63h1M11 64h1M11 65h1M88 66h1M87 67h2M87 68h2M88 69h1M12 70h1M88 70h2M12 71h1M88 71h2M12 72h1M88 72h2M88 73h2M89 74h1M90 75h1M13 77h1M91 77h1M13 78h1M91 78h2M13 79h1M92 79h1M93 80h1M93 81h1M93 82h2M94 83h1M14 84h1M95 84h1M14 85h1M95 85h2M14 86h1M96 86h2M14 87h1M97 87h1M14 88h1M14 89h1M99 89h1M100 90h1M100 91h2M15 92h1M101 92h1M15 93h1M101 93h2M15 94h1M102 94h2M15 95h1M103 95h2M15 96h1M105 96h11M15 97h1M108 97h4M115 97h2M15 98h1M118 98h2M15 99h1M119 99h2M15 100h1M15 101h1M15 102h1M15 103h1M15 104h1M15 105h1M125 119h1M126 120h1M126 121h1M16 122h1M127 122h1M16 123h1M128 123h3M16 124h1M131 124h2M17 125h1M132 125h3M18 126h1M133 126h3M19 127h2M134 127h2M22 128h8M134 128h3M30 129h2M135 129h3M32 130h2M136 130h2M33 131h1M137 131h1M35 137h2M35 138h2M36 139h1M36 140h2M37 141h1M37 142h2M38 143h1M38 144h2M39 145h1M39 146h1M39 147h1M126 147h2M39 148h1M123 148h3M136 148h2M39 149h1M121 149h3M120 150h3M119 151h3M119 152h3M40 153h1M118 153h3M40 154h1M120 154h1M40 155h1M120 155h1M40 156h1M40 157h1M40 158h1M117 158h3M40 159h1M117 159h3M117 160h3M104 161h6M117 161h4M103 162h9M118 162h4M102 163h2M108 163h5M119 163h6M101 164h2M110 164h4M121 164h7M101 165h2M111 165h4M124 165h11M101 166h1M112 166h6M129 166h9M100 167h2M113 167h6M100 168h2M115 168h4M100 169h2M116 169h4M101 170h1M117 170h4M100 171h2M119 171h4M100 172h2M120 172h4M41 173h1M100 173h2M123 173h1M41 174h1M100 174h2M127 175h4M128 176h6M42 177h1M130 177h1M130 178h1M134 178h1M43 179h1M130 179h1M43 180h1M100 180h1M130 180h1M100 181h1M112 181h5M128 181h3M43 182h1M99 182h2M111 182h2M117 182h2M126 182h2M43 183h1M99 183h1M110 183h2M119 183h7M43 184h1M99 184h1M110 184h1M43 185h1M99 185h1M110 185h1M43 186h1M99 186h1M110 186h1M43 187h1M98 187h2M42 188h2M98 188h1M42 189h2M98 189h1M42 190h2M98 190h1M42 191h2M98 191h1M42 192h2M98 192h1M42 193h2M97 193h2"/>
<path stroke="#ff0050" d="M7 14h1M16 15h1M17 17h1M23 22h2M27 23h1M5 24h1M32 24h1M36 25h2M48 26h3M5 28h1M5 29h1M56 29h1M5 30h1M58 30h1M5 31h1M60 31h1M5 32h1M61 32h1M7 33h1M62 33h1M7 34h1M62 34h1M7 35h1M63 35h1M64 36h1M67 39h1M68 40h1M7 41h1M69 41h1M70 42h2M6 43h1M72 43h2M74 44h2M76 45h1M5 46h1M77 46h2M5 47h1M78 47h2M79 48h1M80 49h1M81 50h1M5 52h1M5 53h1M6 56h1M7 57h1M8 58h1M9 59h1M90 60h1M10 61h1M90 61h2M10 62h1M90 62h2M90 63h2M89 64h3M89 65h3M11 66h1M89 66h3M11 67h1M89 67h3M11 68h1M89 68h3M89 69h3M90 70h1M90 71h1M90 72h1M12 73h1M90 73h1M12 74h1M90 74h2M12 75h1M91 75h2M12 76h1M91 76h2M92 77h2M93 78h2M93 79h2M13 80h1M94 80h2M13 81h1M94 81h2M13 82h1M95 82h2M13 83h1M95 83h3M13 84h1M96 84h4M13 85h1M97 85h5M13 86h1M98 86h4M13 87h1M100 87h3M102 88h1M14 90h1M14 91h1M103 91h1M14 92h1M102 92h2M14 93h1M103 93h2M14 94h1M104 94h3M14 95h1M105 95h12M14 96h1M116 96h1M14 97h1M14 98h1M14 99h1M121 99h1M14 100h1M14 101h1M15 106h1M15 107h1M15 108h1M15 109h1M15 110h1M15 111h1M15 112h1M15 113h1M15 114h1M15 115h1M15 116h1M15 117h1M15 118h1M15 119h1M126 119h1M15 120h1M127 120h1M15 121h1M127 121h2M15 122h1M128 122h3M15 123h1M131 123h2M15 124h1M133 124h2M16 125h1M135 125h2M17 126h1M136 126h2M18 127h1M136 127h2M20 128h2M137 128h1M25 129h5M32 131h1M32 132h2M32 133h2M32 134h2M33 135h1M33 136h1M33 137h2M34 138h1M34 139h2M34 140h2M35 141h2M36 142h1M36 143h2M37 144h1M37 145h2M37 146h2M37 147h2M37 148h2M126 148h10M38 149h1M124 149h3M136 149h2M38 150h2M123 150h2M38 151h2M122 151h3M38 152h2M122 152h2M38 153h2M121 153h3M39 154h1M121 154h3M39 155h1M121 155h3M39 156h1M121 156h2M39 157h1M121 157h2M120 158h3M120 159h3M40 160h1M120 160h4M40 161h1M121 161h4M40 162h1M122 162h5M40 163h1M104 163h4M125 163h7M103 164h7M128 164h10M103 165h2M107 165h4M135 165h3M102 166h2M108 166h4M102 167h2M110 167h3M102 168h2M111 168h4M102 169h2M112 169h4M102 170h2M112 170h5M102 171h2M113 171h2M102 172h2M113 172h2M119 172h1M102 173h2M113 173h2M119 173h4M102 174h2M112 174h3M120 174h4M41 175h1M112 175h3M124 175h3M112 176h3M126 176h2M112 177h3M42 178h1M112 178h3M42 179h1M110 179h6M101 180h2M110 180h7M43 181h1M101 181h1M110 181h2M117 181h2M126 181h2M42 182h1M101 182h1M110 182h1M119 182h7M42 183h1M100 183h2M109 183h1M42 184h1M100 184h1M109 184h1M42 185h1M100 185h1M109 185h1M41 186h2M100 186h1M109 186h1M41 187h2M100 187h1M109 187h1M41 188h1M99 188h2M109 188h1M41 189h1M99 189h1M109 189h1M40 190h2M99 190h1M109 190h1M40 191h2M99 191h1M109 191h1M40 192h2M99 192h1M109 192h1M40 193h2M99 193h1"/>
<path stroke="#ff0068" d="M4 19h1M25 22h2M28 23h2M33 24h1M5 25h1M38 25h2M5 27h1M99 27h3M53 28h2M74 28h1M98 28h5M57 29h2M74 29h1M98 29h6M59 30h1M74 30h1M99 30h5M61 31h1M100 31h4M62 32h1M101 32h2M63 34h1M64 35h1M7 36h1M65 36h1M67 38h1M68 39h2M7 40h1M69 40h1M72 42h2M74 43h2M76 44h2M5 45h1M77 45h2M79 46h1M80 47h1M80 48h1M4 49h1M81 49h1M4 50h1M5 54h1M8 59h1M91 59h1M9 60h1M91 60h2M92 61h1M92 62h1M10 63h1M92 63h2M10 64h1M92 64h2M10 65h1M92 65h2M92 66h2M92 67h3M92 68h2M11 69h1M92 69h1M11 70h1M91 70h2M101 70h3M11 71h1M11 72h1M92 74h2M93 75h2M93 76h3M12 77h1M94 77h3M12 78h1M95 78h3M12 79h1M95 79h4M104 79h2M12 80h1M96 80h4M101 80h6M12 81h1M96 81h9M107 81h1M12 82h1M97 82h6M107 82h2M12 83h1M98 83h5M108 83h2M12 84h1M100 84h2M108 84h2M108 85h1M106 87h1M13 88h1M103 88h3M13 89h1M103 89h3M13 90h1M103 90h3M13 91h1M104 91h2M13 92h1M104 92h4M13 93h1M105 93h9M107 94h10M14 102h1M14 103h1M14 104h1M14 105h1M14 106h1M14 107h1M14 108h1M14 109h1M14 110h1M14 111h1M14 112h1M14 113h1M14 114h1M14 115h1M14 116h1M14 117h1M14 118h1M14 119h1M127 119h1M14 120h1M128 120h1M14 121h1M129 121h2M14 122h1M131 122h2M14 123h1M133 123h3M14 124h1M135 124h3M15 125h1M137 125h1M16 126h1M17 127h1M19 128h1M21 129h4M30 134h2M32 135h1M32 136h1M32 137h1M32 138h2M32 139h2M32 140h2M33 141h2M33 142h3M34 143h2M35 144h2M35 145h2M35 146h2M36 147h1M36 148h1M36 149h2M127 149h9M36 150h2M125 150h3M135 150h3M36 151h2M125 151h2M36 152h2M124 152h3M36 153h2M124 153h3M36 154h3M124 154h2M37 155h2M124 155h2M37 156h2M123 156h3M37 157h2M123 157h3M37 158h3M123 158h3M38 159h2M123 159h4M38 160h2M124 160h4M39 161h1M125 161h5M39 162h1M127 162h10M132 163h6M40 164h1M40 165h1M105 165h2M40 166h1M104 166h4M40 167h1M104 167h6M104 168h7M104 169h8M104 170h8M104 171h9M104 172h9M104 173h9M104 174h8M119 174h1M106 175h1M115 175h9M41 176h1M106 176h1M115 176h4M120 176h6M41 177h1M106 177h1M115 177h3M124 177h1M106 178h1M115 178h3M106 179h4M116 179h2M42 180h1M103 180h7M117 180h2M41 181h2M102 181h3M107 181h3M119 181h7M41 182h1M102 182h2M108 182h2M41 183h1M102 183h1M108 183h1M41 184h1M101 184h2M108 184h1M40 185h2M101 185h1M108 185h1M40 186h1M101 186h1M108 186h1M40 187h1M101 187h1M40 188h1M101 188h1M39 189h2M100 189h1M39 190h1M100 190h1M39 191h1M100 191h1M39 192h1M100 192h1M39 193h1M100 193h1"/>
<path stroke="#ff0080" d="M15 13h1M16 14h1M5 15h1M4 16h1M17 16h1M18 17h1M4 20h1M25 21h1M27 22h2M30 23h1M34 24h1M100 25h2M5 26h1M51 26h1M73 26h3M98 26h4M72 27h5M96 27h3M55 28h2M72 28h2M75 28h2M96 28h2M59 29h1M72 29h2M75 29h2M97 29h1M104 29h1M60 30h2M75 30h2M97 30h2M104 30h2M62 31h1M74 31h3M97 31h3M104 31h2M63 32h1M74 32h3M97 32h4M103 32h3M63 33h1M74 33h3M98 33h7M64 34h1M74 34h1M99 34h6M65 35h1M101 35h3M66 36h2M67 37h2M68 38h5M73 40h1M73 41h2M6 42h1M74 42h2M5 44h1M78 44h2M79 45h2M80 46h2M4 47h1M81 47h1M4 48h1M81 48h2M4 51h1M4 52h1M127 53h2M127 54h2M5 55h1M127 55h2M5 56h1M127 56h3M6 57h1M128 57h2M7 58h1M92 58h1M92 59h2M8 60h1M93 60h2M9 61h1M93 61h3M9 62h1M93 62h3M94 63h2M102 63h3M94 64h4M99 64h6M94 65h11M10 66h1M94 66h11M10 67h1M95 67h10M10 68h1M94 68h14M96 69h12M96 70h5M104 70h4M95 71h12M95 72h12M11 73h1M94 73h13M11 74h1M94 74h13M11 75h1M95 75h15M11 76h1M96 76h14M97 77h14M98 78h12M99 79h5M106 79h2M100 80h1M107 80h2M108 81h1M111 81h3M109 82h5M110 83h4M110 84h4M12 85h1M109 85h5M12 86h1M108 86h5M12 87h1M107 87h5M12 88h1M106 88h4M12 89h1M106 89h4M12 90h1M106 90h4M106 91h8M108 92h9M114 93h3M13 94h1M13 95h1M13 96h1M13 97h1M13 98h1M13 99h1M13 100h1M13 101h1M13 102h1M13 103h1M13 104h1M126 106h1M126 107h1M13 116h1M13 117h1M13 118h1M128 118h1M13 119h1M128 119h2M13 120h1M129 120h2M13 121h1M131 121h2M13 122h1M133 122h2M13 123h1M136 123h2M13 124h1M14 125h1M15 126h1M16 127h1M18 128h1M19 129h2M27 134h3M30 140h2M31 141h2M31 142h2M31 143h3M32 144h3M32 145h3M33 146h2M33 147h3M33 148h3M33 149h3M33 150h3M128 150h7M33 151h3M127 151h11M33 152h3M127 152h4M133 152h5M33 153h3M127 153h3M135 153h3M33 154h3M126 154h4M137 154h1M33 155h4M126 155h4M34 156h3M126 156h4M34 157h3M126 157h4M34 158h3M126 158h4M34 159h4M127 159h5M35 160h3M128 160h8M35 161h4M130 161h8M36 162h3M137 162h1M37 163h3M38 164h2M39 165h1M39 166h1M40 168h1M40 169h1M40 170h1M40 171h1M40 172h1M40 173h1M40 174h1M40 175h1M119 176h1M118 177h6M41 178h1M118 178h7M41 179h1M118 179h7M40 180h2M119 180h6M40 181h1M105 181h2M40 182h1M104 182h4M40 183h1M103 183h5M39 184h2M103 184h1M107 184h1M39 185h1M102 185h2M107 185h1M39 186h1M102 186h1M107 186h1M39 187h1M102 187h1M38 188h2M102 188h1M38 189h1M101 189h1M38 190h1M101 190h1M38 191h1M101 191h1M38 192h1M101 192h1M38 193h1M101 193h1"/>
<path stroke="#ff0098" d="M20 17h4M25 18h1M25 19h2M25 20h3M4 21h1M26 21h3M4 22h1M29 22h2M31 23h2M101 23h4M35 24h1M74 24h2M98 24h8M72 25h6M96 25h4M71 26h2M76 26h3M95 26h3M52 27h1M71 27h1M77 27h2M94 27h2M106 27h1M57 28h3M71 28h1M77 28h2M95 28h1M105 28h2M60 29h2M71 29h1M77 29h2M105 29h2M4 30h1M62 30h1M77 30h2M106 30h1M4 31h1M63 31h1M77 31h2M106 31h1M4 32h1M64 32h1M77 32h2M93 32h4M106 32h1M64 33h2M77 33h2M94 33h4M105 33h2M65 34h2M95 34h4M105 34h2M66 35h3M71 35h4M96 35h1M104 35h2M68 36h7M101 36h4M69 37h8M101 37h3M73 38h4M73 39h4M74 40h2M6 41h1M75 41h1M5 43h1M80 44h3M4 45h1M81 45h3M4 46h1M82 46h3M82 47h2M83 48h1M3 49h1M3 50h1M127 50h2M115 51h1M126 51h4M113 52h4M125 52h6M4 53h1M115 53h2M124 53h3M129 53h2M4 54h1M123 54h4M129 54h3M123 55h4M129 55h3M123 56h4M130 56h3M123 57h1M127 57h1M130 57h3M6 58h1M93 58h1M127 58h6M7 59h1M94 59h3M104 59h2M128 59h4M95 60h4M102 60h5M8 61h1M96 61h4M101 61h7M96 62h12M9 63h1M96 63h6M108 63h1M9 64h1M98 64h1M108 64h1M9 65h1M108 65h2M9 66h1M108 66h2M108 67h3M108 68h3M10 69h1M108 69h4M10 70h1M108 70h5M10 71h1M112 71h1M10 72h1M112 72h2M10 73h1M112 73h3M112 74h3M112 75h3M110 76h6M11 77h1M111 77h2M115 77h1M11 78h1M115 78h1M11 79h1M115 79h2M11 80h1M114 80h3M11 81h1M114 81h3M11 82h1M114 82h4M11 83h1M114 83h4M11 84h1M114 84h4M11 85h1M114 85h4M11 86h1M113 86h4M11 87h1M112 87h5M110 88h7M110 89h7M110 90h8M12 91h1M114 91h5M12 92h1M12 93h1M12 94h1M12 95h1M12 96h1M13 105h1M13 106h1M127 106h1M13 107h1M127 107h1M13 108h1M13 109h1M13 110h1M13 111h1M13 112h1M13 113h1M13 114h1M13 115h1M129 117h1M129 118h2M130 119h1M12 120h1M131 120h2M12 121h1M133 121h2M12 122h1M135 122h3M12 123h1M12 124h1M13 125h1M14 126h1M15 127h1M16 128h2M18 129h1M24 134h3M28 140h2M28 141h3M28 142h3M28 143h3M28 144h4M29 145h3M29 146h4M30 147h3M32 148h1M32 149h1M32 150h1M32 151h1M32 152h1M131 152h2M32 153h1M130 153h5M32 154h1M130 154h7M32 155h1M130 155h8M32 156h2M130 156h8M32 157h2M130 157h8M32 158h2M130 158h8M32 159h2M132 159h6M32 160h3M136 160h2M32 161h3M32 162h4M32 163h5M33 164h5M34 165h5M35 166h4M36 167h4M37 168h3M37 169h3M38 170h2M38 171h2M38 172h2M38 173h2M39 174h1M39 175h1M39 176h2M39 177h2M39 178h2M39 179h2M39 180h1M38 181h2M38 182h2M38 183h2M38 184h1M104 184h3M37 185h2M104 185h3M37 186h2M103 186h4M37 187h2M103 187h4M37 188h1M103 188h1M106 188h1M37 189h1M102 189h2M106 189h1M37 190h1M102 190h1M106 190h1M37 191h1M102 191h1M106 191h1M37 192h1M37 193h1"/>
<path stroke="#ff05a9" d="M11 12h3M6 14h1M88 14h2M17 15h1M87 15h6M18 16h1M20 16h6M87 16h8M19 17h1M24 17h3M87 17h8M26 18h2M89 18h7M27 19h2M94 19h2M28 20h2M29 21h2M100 21h6M31 22h1M97 22h9M4 23h1M33 23h1M72 23h5M96 23h5M105 23h2M4 24h1M36 24h2M71 24h3M76 24h3M94 24h4M106 24h1M4 25h1M47 25h4M71 25h1M78 25h2M93 25h3M106 25h2M4 26h1M70 26h1M79 26h2M92 26h3M106 26h2M4 27h1M53 27h7M70 27h1M79 27h3M92 27h2M107 27h1M4 28h1M60 28h3M69 28h2M79 28h4M107 28h1M4 29h1M62 29h4M69 29h2M79 29h5M107 29h1M63 30h4M68 30h1M79 30h2M84 30h1M90 30h1M107 30h2M64 31h5M79 31h2M84 31h2M90 31h2M107 31h2M65 32h4M79 32h1M83 32h4M89 32h4M107 32h2M6 33h1M66 33h3M79 33h1M83 33h4M89 33h5M107 33h1M6 34h1M67 34h2M84 34h1M89 34h6M107 34h1M69 35h2M80 35h1M90 35h6M106 35h2M80 36h1M91 36h6M105 36h3M77 37h1M80 37h1M92 37h5M104 37h3M77 38h4M93 38h1M101 38h4M77 39h5M100 39h4M6 40h1M78 40h4M99 40h4M80 41h4M99 41h2M5 42h1M80 42h6M126 42h2M81 43h5M126 43h2M4 44h1M83 44h3M126 44h2M84 45h1M126 45h2M125 46h3M3 47h1M126 47h2M3 48h1M125 48h5M126 49h6M126 50h1M129 50h4M3 51h1M112 51h3M116 51h3M130 51h3M3 52h1M90 52h1M112 52h1M117 52h3M122 52h3M131 52h3M112 53h3M117 53h7M131 53h3M115 54h8M132 54h2M4 55h1M118 55h5M132 55h3M118 56h5M133 56h3M5 57h1M93 57h2M104 57h1M118 57h5M133 57h3M94 58h5M104 58h4M118 58h4M133 58h3M6 59h1M97 59h2M106 59h3M117 59h5M127 59h1M132 59h4M7 60h1M107 60h3M117 60h5M126 60h9M7 61h1M108 61h4M119 61h2M8 62h1M108 62h5M8 63h1M109 63h5M8 64h1M109 64h6M110 65h6M110 66h6M9 67h1M111 67h6M9 68h1M111 68h6M9 69h1M112 69h5M9 70h1M113 70h1M113 71h1M115 73h3M10 74h1M115 74h3M10 75h1M115 75h3M10 76h1M116 76h1M10 77h1M116 77h1M10 78h1M116 78h1M117 79h2M117 80h3M117 81h3M118 82h2M118 83h2M118 84h2M118 85h2M117 86h3M117 87h3M11 88h1M117 88h3M11 89h1M117 89h3M11 90h1M118 90h3M11 91h1M11 92h1M11 93h1M125 94h1M126 96h1M12 97h1M12 98h1M12 99h1M12 100h1M12 101h1M12 102h1M12 103h1M12 104h1M128 104h1M12 105h1M128 105h1M12 106h1M128 106h1M12 107h1M128 107h1M12 108h1M128 108h1M12 109h1M128 109h1M12 110h1M129 110h1M12 111h1M129 111h1M12 112h1M129 112h1M12 113h1M129 113h1M12 114h1M129 114h2M12 115h1M130 115h1M12 116h1M130 116h1M12 117h1M130 117h2M12 118h1M131 118h2M12 119h1M131 119h3M133 120h2M11 121h1M135 121h3M11 122h1M11 123h1M11 124h1M12 125h1M13 126h1M14 127h1M15 128h1M16 129h2M18 130h1M21 134h3M22 135h3M23 136h2M24 137h1M24 138h1M25 140h3M25 141h3M25 142h3M24 143h4M24 144h4M24 145h5M24 146h5M25 147h5M26 148h3M27 149h2M27 150h2M27 151h2M27 152h2M27 153h2M27 154h2M27 155h2M26 156h3M26 157h3M26 158h3M26 159h3M27 160h2M27 161h2M28 162h1M28 163h1M32 164h1M32 165h2M32 166h3M32 167h4M32 168h5M33 169h4M33 170h5M33 171h5M34 172h4M34 173h4M34 174h5M35 175h4M35 176h4M35 177h4M35 178h4M36 179h3M36 180h3M36 181h2M36 182h2M36 183h2M36 184h2M36 185h1M36 186h1M36 187h1M36 188h1M104 188h2M36 189h1M104 189h2M36 190h1M103 190h3M36 191h1M103 191h3M36 192h1M36 193h1"/>
<path stroke="#ff0cb8" d="M24 8h3M23 9h4M23 10h4M86 10h4M23 11h4M85 11h6M9 12h2M14 12h1M23 12h4M85 12h7M7 13h2M16 13h1M23 13h4M84 13h10M17 14h1M22 14h5M83 14h5M90 14h5M20 15h8M83 15h4M93 15h4M19 16h1M26 16h3M74 16h3M83 16h4M95 16h3M3 17h1M27 17h2M73 17h5M84 17h3M95 17h4M3 18h1M28 18h2M73 18h6M85 18h4M96 18h8M3 19h1M29 19h2M74 19h6M86 19h8M96 19h10M30 20h2M89 20h18M31 21h2M92 21h8M106 21h2M32 22h1M71 22h2M92 22h5M106 22h2M34 23h2M71 23h1M92 23h4M107 23h1M38 24h2M70 24h1M91 24h3M107 24h1M69 25h2M90 25h3M108 25h1M52 26h1M57 26h6M68 26h2M81 26h4M86 26h1M89 26h3M108 26h1M60 27h10M82 27h10M108 27h1M63 28h6M83 28h8M108 28h1M66 29h3M84 29h7M108 29h2M67 30h1M85 30h5M109 30h1M86 31h4M109 31h2M87 32h2M109 32h2M87 33h2M130 33h1M88 34h1M6 35h1M89 35h1M6 36h1M88 36h3M87 37h5M107 37h1M81 38h3M87 38h6M105 38h2M82 39h9M104 39h2M82 40h9M103 40h3M125 40h4M5 41h1M84 41h8M101 41h5M123 41h7M86 42h7M99 42h6M123 42h3M128 42h2M4 43h1M89 43h15M128 43h3M92 44h10M128 44h3M3 45h1M92 45h6M128 45h3M3 46h1M128 46h4M122 47h4M128 47h6M2 48h1M122 48h3M130 48h5M2 49h1M132 49h4M2 50h1M112 50h8M133 50h4M2 51h1M90 51h2M119 51h1M133 51h4M91 52h1M134 52h3M3 53h1M92 53h1M134 53h3M3 54h1M112 54h1M134 54h3M115 55h3M135 55h2M4 56h1M93 56h2M99 56h1M104 56h3M115 56h3M136 56h1M4 57h1M95 57h5M105 57h5M115 57h3M136 57h2M5 58h1M108 58h4M115 58h3M136 58h2M5 59h1M109 59h8M136 59h2M6 60h1M110 60h7M135 60h3M112 61h7M121 61h17M7 62h1M113 62h25M7 63h1M114 63h10M133 63h3M115 64h7M8 65h1M116 65h5M8 66h1M116 66h5M8 67h1M117 67h4M8 68h1M117 68h4M8 69h1M117 69h4M118 70h2M9 71h1M118 71h2M9 72h1M118 72h2M9 73h1M118 73h2M9 74h1M118 74h2M9 75h1M9 76h1M10 79h1M119 79h2M10 80h1M120 80h2M10 81h1M120 81h2M10 82h1M120 82h2M10 83h1M120 83h2M10 84h1M120 84h2M10 85h1M120 85h2M10 86h1M120 86h2M10 87h1M120 87h2M10 88h1M120 88h2M10 89h1M120 89h2M10 90h1M121 90h2M10 91h1M125 93h1M11 94h1M126 94h2M11 95h1M126 95h2M11 96h1M127 96h2M11 97h1M127 97h2M11 98h1M127 98h2M11 99h1M128 99h1M11 100h1M128 100h1M11 101h1M128 101h1M128 102h1M128 103h2M129 104h1M129 105h1M129 106h1M129 107h1M129 108h2M129 109h2M130 110h1M130 111h1M130 112h2M130 113h2M131 114h2M11 115h1M131 115h2M11 116h1M131 116h3M11 117h1M132 117h2M11 118h1M133 118h2M11 119h1M134 119h2M11 120h1M135 120h3M10 122h1M10 123h1M10 124h1M11 125h1M11 126h2M12 127h2M13 128h2M15 129h1M16 130h2M17 131h2M18 132h1M19 134h2M20 135h2M21 136h2M22 137h2M22 138h2M23 139h2M23 140h2M23 141h2M23 142h2M23 143h1M23 144h1M23 145h1M23 146h1M23 147h2M23 148h3M23 149h4M24 150h3M24 151h3M24 152h3M24 153h3M23 154h4M23 155h4M23 156h3M23 157h3M23 158h3M24 159h2M24 160h3M24 161h3M24 162h4M25 163h3M25 164h4M26 165h3M27 166h2M27 167h2M28 168h4M29 169h4M29 170h4M30 171h3M30 172h4M31 173h3M31 174h3M31 175h4M32 176h3M32 177h3M32 178h3M33 179h3M33 180h3M33 181h3M33 182h3M33 183h3M33 184h3M34 185h2M34 186h2M34 187h2M34 188h2M35 189h1M35 190h1M35 191h1"/>
<path stroke="#ff14c6" d="M23 6h4M23 7h5M86 7h2M22 8h2M27 8h1M84 8h6M22 9h1M27 9h2M83 9h9M21 10h2M27 10h2M82 10h4M90 10h4M21 11h2M27 11h2M81 11h4M91 11h5M6 12h3M21 12h2M27 12h2M80 12h5M92 12h5M5 13h2M20 13h3M27 13h2M78 13h6M94 13h5M5 14h1M19 14h3M27 14h3M73 14h10M95 14h5M4 15h1M18 15h2M28 15h2M72 15h11M97 15h4M3 16h1M29 16h2M72 16h2M77 16h6M98 16h6M29 17h3M72 17h1M78 17h6M99 17h7M30 18h2M72 18h1M79 18h6M104 18h4M31 19h2M80 19h6M106 19h2M3 20h1M32 20h2M80 20h9M107 20h2M3 21h1M33 21h1M81 21h11M108 21h1M3 22h1M33 22h2M70 22h1M83 22h9M108 22h1M3 23h1M36 23h2M69 23h2M86 23h6M108 23h2M3 24h1M68 24h2M87 24h4M108 24h2M3 25h1M51 25h1M54 25h7M66 25h3M87 25h3M109 25h1M3 26h1M53 26h4M63 26h5M87 26h2M109 26h1M3 27h1M109 27h2M3 28h1M109 28h2M3 29h1M110 29h1M127 29h5M3 30h1M110 30h2M126 30h7M3 31h1M111 31h3M125 31h10M111 32h4M125 32h10M111 33h4M124 33h6M131 33h5M111 34h4M124 34h12M111 35h4M123 35h11M113 36h4M123 36h11M113 37h3M123 37h11M113 38h2M122 38h14M121 39h14M5 40h1M121 40h4M129 40h6M120 41h3M130 41h5M4 42h1M105 42h1M120 42h3M130 42h5M104 43h2M108 43h1M120 43h1M131 43h4M3 44h1M102 44h5M120 44h1M131 44h4M98 45h8M120 45h1M131 45h7M2 46h1M92 46h14M120 46h1M132 46h6M2 47h1M92 47h5M119 47h3M134 47h4M92 48h2M115 48h7M135 48h3M91 49h2M111 49h9M136 49h2M91 50h2M137 50h1M92 51h1M137 51h1M2 52h1M92 52h2M109 52h1M137 52h1M2 53h1M93 53h1M103 53h3M109 53h1M93 54h2M101 54h10M3 55h1M94 55h7M103 55h8M3 56h1M95 56h4M107 56h4M110 57h1M4 58h1M5 60h1M6 61h1M6 62h1M6 63h1M124 63h9M136 63h2M6 64h2M122 64h2M129 64h9M7 65h1M121 65h3M129 65h9M7 66h1M121 66h3M132 66h6M7 67h1M121 67h3M134 67h4M7 68h1M121 68h3M136 68h2M7 69h1M121 69h2M8 70h1M120 70h3M8 71h1M120 71h3M8 72h1M120 72h3M8 73h1M120 73h2M8 74h1M120 74h2M8 75h1M120 75h2M8 76h1M121 76h2M9 77h1M121 77h2M9 78h1M121 78h2M9 79h1M121 79h2M9 80h1M122 80h2M9 81h1M122 81h2M9 82h1M122 82h2M137 82h1M9 83h1M122 83h2M9 84h1M122 84h2M9 85h1M122 85h2M9 86h1M122 86h2M9 87h1M122 87h1M9 88h1M122 88h1M9 89h1M122 89h2M123 90h1M10 92h1M125 92h2M10 93h1M126 93h3M10 94h1M128 94h4M10 95h1M128 95h5M10 96h1M129 96h3M129 97h3M129 98h2M129 99h2M129 100h2M129 101h2M11 102h1M129 102h2M11 103h1M130 103h1M11 104h1M130 104h1M11 105h1M130 105h2M11 106h1M130 106h2M11 107h1M130 107h2M11 108h1M131 108h1M11 109h1M131 109h2M11 110h1M131 110h2M11 111h1M131 111h3M11 112h1M132 112h2M11 113h1M132 113h2M11 114h1M133 114h2M133 115h3M134 116h2M10 117h1M134 117h3M10 118h1M135 118h3M10 119h1M136 119h2M10 120h1M10 121h1M9 122h1M9 123h1M9 124h1M9 125h2M10 126h1M11 127h1M12 128h1M13 129h2M14 130h2M15 131h2M16 132h2M17 133h2M17 134h2M18 135h2M19 136h2M20 137h2M20 138h2M22 139h1M22 140h1M22 141h1M22 142h1M22 143h1M22 144h1M22 145h1M22 146h1M22 147h1M22 148h1M22 149h1M22 150h2M22 151h2M23 152h1M23 153h1M23 159h1M22 160h2M22 161h2M22 162h2M22 163h3M22 164h3M23 165h3M23 166h4M24 167h3M24 168h4M25 169h4M26 170h3M26 171h4M26 172h4M27 173h4M27 174h4M28 175h3M28 176h4M29 177h3M29 178h3M30 179h3M30 180h3M31 181h2M31 182h2M31 183h2M31 184h2M32 185h2M32 186h2M32 187h2M33 188h1M33 189h2M34 190h1"/>
<path stroke="#ff1cd4" d="M23 4h3M22 5h6M21 6h2M27 6h2M83 6h6M21 7h2M28 7h2M82 7h4M88 7h3M20 8h2M28 8h2M81 8h3M90 8h4M20 9h2M29 9h2M79 9h4M92 9h6M20 10h1M29 10h2M78 10h4M94 10h7M6 11h4M19 11h2M29 11h2M76 11h5M96 11h7M4 12h2M15 12h1M19 12h2M29 12h3M73 12h7M97 12h7M3 13h2M17 13h3M29 13h3M72 13h6M99 13h6M3 14h2M18 14h1M30 14h2M71 14h2M100 14h6M3 15h1M30 15h3M71 15h1M101 15h6M2 16h1M31 16h3M71 16h1M104 16h2M2 17h1M32 17h2M70 17h2M2 18h1M32 18h3M108 18h2M2 19h1M33 19h2M108 19h2M2 20h1M34 20h2M109 20h2M2 21h1M34 21h3M69 21h1M109 21h2M2 22h1M35 22h4M67 22h3M109 22h3M2 23h1M38 23h2M52 23h9M66 23h3M110 23h3M2 24h1M49 24h12M66 24h2M110 24h3M116 24h1M122 24h9M2 25h1M52 25h2M110 25h3M116 25h1M121 25h12M2 26h1M110 26h2M115 26h3M121 26h13M2 27h1M111 27h1M115 27h4M120 27h13M2 28h1M115 28h18M2 29h1M113 29h14M132 29h1M2 30h1M112 30h14M114 31h1M118 31h7M135 31h3M3 32h1M118 32h7M135 32h3M4 33h2M118 33h6M136 33h2M5 34h1M118 34h6M136 34h2M5 35h1M118 35h5M5 36h1M117 36h6M119 37h4M119 38h3M136 38h2M113 39h2M119 39h2M135 39h3M4 40h1M111 40h4M120 40h1M135 40h3M4 41h1M110 41h6M135 41h3M3 42h1M110 42h6M119 42h1M3 43h1M109 43h11M2 44h1M108 44h12M2 45h1M109 45h11M109 46h11M1 47h1M97 47h8M109 47h10M1 48h1M94 48h11M109 48h6M1 49h1M93 49h4M100 49h5M108 49h3M1 50h1M93 50h3M101 50h9M1 51h1M93 51h2M101 51h9M1 52h1M94 52h2M100 52h9M94 53h9M106 53h3M2 54h1M95 54h6M2 55h1M3 57h1M3 58h1M4 59h1M4 60h1M4 61h2M5 62h1M5 63h1M5 64h1M5 65h2M6 66h1M129 66h3M6 67h1M124 67h1M127 67h7M6 68h1M124 68h12M6 69h1M123 69h10M135 69h3M6 70h2M123 70h7M135 70h3M6 71h2M123 71h6M135 71h3M7 72h1M123 72h3M135 72h3M7 73h1M122 73h3M135 73h3M7 74h1M122 74h3M134 74h4M7 75h1M122 75h3M134 75h4M7 76h1M123 76h2M133 76h5M7 77h2M123 77h3M132 77h6M8 78h1M123 78h4M130 78h8M8 79h1M123 79h15M8 80h1M124 80h14M8 81h1M124 81h14M8 82h1M124 82h13M8 83h1M124 83h8M8 84h1M124 84h8M8 85h1M124 85h3M130 85h3M8 86h1M124 86h2M131 86h3M8 87h1M123 87h3M133 87h1M8 88h1M123 88h3M134 88h1M8 89h1M124 89h2M134 89h1M8 90h2M124 90h3M134 90h2M9 91h1M125 91h4M131 91h7M9 92h1M127 92h11M9 93h1M129 93h9M9 94h1M132 94h6M9 95h1M133 95h5M132 96h6M10 97h1M132 97h4M10 98h1M131 98h3M10 99h1M131 99h2M10 100h1M131 100h2M10 101h1M131 101h2M10 102h1M131 102h2M10 103h1M131 103h2M10 104h1M131 104h2M10 105h1M132 105h2M10 106h1M132 106h2M10 107h1M132 107h2M10 108h1M132 108h3M10 109h1M133 109h2M10 110h1M133 110h3M10 111h1M134 111h2M10 112h1M134 112h3M10 113h1M134 113h3M10 114h1M135 114h3M10 115h1M136 115h2M10 116h1M136 116h2M9 117h1M137 117h1M9 118h1M9 119h1M9 120h1M8 121h2M8 122h1M8 123h1M8 124h1M8 125h1M8 126h2M9 127h2M10 128h2M11 129h2M12 130h2M13 131h2M14 132h2M15 133h2M16 134h1M16 135h2M17 136h2M18 137h2M19 138h1M18 150h1M18 151h1M17 152h2M17 153h2M17 154h2M18 155h1M18 156h1M18 157h1M18 158h1M22 165h1M22 166h1M22 167h2M22 168h2M21 169h4M22 170h4M22 171h4M22 172h4M23 173h4M23 174h4M23 175h5M24 176h4M24 177h5M25 178h4M26 179h4M26 180h4M27 181h4M27 182h4M28 183h3M29 184h2M29 185h3M30 186h2M30 187h2M31 188h2M32 189h1"/>
<path stroke="#ff23e2" d="M21 3h6M20 4h3M26 4h3M81 4h3M86 4h2M20 5h2M28 5h2M80 5h10M19 6h2M29 6h2M78 6h5M89 6h5M19 7h2M30 7h2M76 7h6M91 7h7M18 8h2M30 8h3M75 8h6M94 8h14M18 9h2M31 9h2M73 9h6M98 9h13M2 10h8M17 10h3M31 10h4M72 10h6M101 10h4M107 10h5M0 11h6M10 11h5M16 11h3M31 11h4M71 11h5M103 11h2M109 11h3M0 12h4M16 12h3M32 12h3M70 12h3M104 12h1M109 12h3M0 13h3M32 13h4M69 13h3M105 13h2M109 13h4M0 14h3M32 14h4M69 14h2M106 14h1M110 14h4M0 15h3M33 15h3M68 15h3M111 15h4M0 16h2M34 16h7M67 16h4M111 16h6M0 17h2M34 17h12M53 17h7M64 17h2M69 17h1M110 17h7M120 17h1M0 18h2M35 18h5M56 18h4M64 18h2M110 18h7M119 18h5M128 18h8M0 19h2M35 19h5M56 19h4M64 19h1M110 19h13M128 19h10M0 20h2M36 20h4M56 20h5M64 20h1M111 20h3M117 20h6M128 20h10M0 21h2M37 21h3M56 21h5M66 21h3M111 21h3M117 21h6M128 21h10M0 22h2M39 22h1M56 22h5M66 22h1M112 22h2M116 22h7M126 22h7M137 22h1M0 23h2M49 23h3M113 23h1M116 23h17M137 23h1M0 24h2M117 24h5M131 24h2M137 24h1M0 25h2M117 25h4M137 25h1M0 26h2M118 26h3M134 26h4M0 27h2M119 27h1M0 28h2M0 29h2M0 30h2M0 31h3M0 32h3M0 33h4M0 34h5M0 35h5M0 36h5M1 40h3M1 41h3M1 42h2M1 43h2M1 44h1M1 45h1M0 46h2M0 47h1M0 48h1M0 49h1M97 49h3M0 50h1M96 50h5M0 51h1M95 51h6M0 52h1M96 52h4M1 53h1M1 54h1M1 55h1M2 56h1M2 57h1M2 58h1M2 59h2M3 60h1M3 61h1M3 62h2M3 63h2M3 64h2M3 65h2M4 66h2M4 67h2M4 68h2M4 69h2M5 70h1M5 71h1M5 72h2M126 72h3M5 73h2M125 73h4M5 74h2M125 74h4M133 74h1M5 75h2M125 75h9M6 76h1M125 76h8M6 77h1M126 77h6M6 78h2M127 78h3M7 79h1M7 80h1M7 81h1M7 82h1M7 83h1M7 84h1M7 85h1M127 85h3M7 86h1M126 86h5M7 87h1M126 87h7M7 88h1M126 88h8M7 89h1M126 89h8M7 90h1M127 90h7M7 91h2M129 91h2M7 92h2M7 93h2M8 94h1M8 95h1M8 96h2M8 97h2M136 97h2M9 98h1M134 98h4M9 99h1M133 99h3M9 100h1M133 100h2M9 101h1M133 101h2M9 102h1M133 102h2M9 103h1M133 103h3M9 104h1M133 104h3M9 105h1M134 105h2M9 106h1M134 106h3M9 107h1M134 107h3M9 108h1M135 108h3M9 109h1M135 109h3M9 110h1M136 110h2M9 111h1M136 111h2M9 112h1M137 112h1M9 113h1M137 113h1M9 114h1M8 115h2M8 116h2M8 117h1M8 118h1M8 119h1M7 120h2M7 121h1M7 122h1M7 123h1M7 124h1M7 125h1M7 126h1M7 127h2M8 128h2M9 129h2M10 130h2M11 131h2M12 132h2M13 133h2M13 134h3M14 135h2M15 136h2M16 137h2M17 138h2M17 139h2M18 140h1M18 141h1M18 147h1M17 148h2M16 149h3M15 150h3M14 151h4M14 152h3M14 153h3M14 154h3M14 155h4M14 156h4M14 157h4M14 158h4M14 159h5M14 160h5M15 161h4M15 162h4M15 163h4M16 164h3M16 165h3M16 166h3M16 167h3M16 168h3M16 169h3M17 170h2M21 170h1M17 171h2M21 171h1M17 172h5M18 173h5M18 174h5M19 175h4M19 176h5M20 177h4M20 178h5M20 179h6M21 180h5M22 181h5M22 182h5M23 183h5M24 184h5M25 185h4M25 186h5M27 187h3M30 188h1"/>
<path stroke="#ff2af1" d="M22 0h1M107 0h17M128 0h10M20 1h9M106 1h7M116 1h8M128 1h10M19 2h15M78 2h6M86 2h2M104 2h9M116 2h8M127 2h11M18 3h3M27 3h7M76 3h8M86 3h6M103 3h10M116 3h22M17 4h3M29 4h4M74 4h7M88 4h7M102 4h7M116 4h22M17 5h3M30 5h3M37 5h2M73 5h7M90 5h19M113 5h9M124 5h14M17 6h2M31 6h2M37 6h2M59 6h2M71 6h7M94 6h14M113 6h8M124 6h14M0 7h8M16 7h3M32 7h1M37 7h2M56 7h7M70 7h6M98 7h10M113 7h8M124 7h14M0 8h9M16 8h2M36 8h3M56 8h7M67 8h8M111 8h10M124 8h4M132 8h6M0 9h18M36 9h8M50 9h4M55 9h18M111 9h9M124 9h4M132 9h6M0 10h2M10 10h7M35 10h9M50 10h1M55 10h17M112 10h8M123 10h4M132 10h6M15 11h1M35 11h1M42 11h1M49 11h2M55 11h5M66 11h5M112 11h7M123 11h4M131 11h7M35 12h1M42 12h1M49 12h2M55 12h5M66 12h4M112 12h7M123 12h5M131 12h7M42 13h1M49 13h2M55 13h5M66 13h3M113 13h5M122 13h16M42 14h2M46 14h5M55 14h5M64 14h5M114 14h3M122 14h16M42 15h2M46 15h14M64 15h4M115 15h2M122 15h14M41 16h5M53 16h7M64 16h3M120 16h16M121 17h15M0 40h1M0 41h1M0 42h1M0 43h1M0 44h1M0 45h1M0 53h1M0 54h1M0 55h1M0 56h2M0 57h2M0 58h2M0 59h2M0 60h3M0 61h3M0 62h3M0 63h3M0 64h3M0 65h3M0 66h4M1 67h3M1 68h3M1 69h3M1 70h4M2 71h3M2 72h3M2 73h3M2 74h3M2 75h3M3 76h3M4 77h2M4 78h2M5 79h2M5 80h2M5 81h2M5 82h2M5 83h2M5 84h2M5 85h2M5 86h2M5 87h2M5 88h2M5 89h2M5 90h2M5 91h2M5 92h2M5 93h2M6 94h2M6 95h2M6 96h2M6 97h2M6 98h3M7 99h2M136 99h2M7 100h2M135 100h3M7 101h2M135 101h3M7 102h2M135 102h3M7 103h2M136 103h2M7 104h2M136 104h2M7 105h2M136 105h2M7 106h2M137 106h1M7 107h2M137 107h1M7 108h2M7 109h2M7 110h2M7 111h2M7 112h2M7 113h2M6 114h3M6 115h2M6 116h2M6 117h2M6 118h2M5 119h3M5 120h2M5 121h2M5 122h2M5 123h2M5 124h2M5 125h2M5 126h2M5 127h2M5 128h3M6 129h3M6 130h4M7 131h4M8 132h4M9 133h4M9 134h4M10 135h4M11 136h4M13 137h3M14 138h3M15 139h2M16 140h2M16 141h2M17 142h2M17 143h2M17 144h2M17 145h2M16 146h3M15 147h3M13 148h4M12 149h4M14 150h1M13 155h1M13 156h1M12 157h2M12 158h2M10 159h4M10 160h4M9 161h6M9 162h6M8 163h7M8 164h8M10 165h6M7 166h1M11 166h5M7 167h1M11 167h5M7 168h1M11 168h5M7 169h1M11 169h5M7 170h1M11 170h6M7 171h10M7 172h10M7 173h11M7 174h11M8 175h11M8 176h11M8 177h12M8 178h12M8 179h12M8 180h13M8 181h14M9 182h13M11 183h12M12 184h12M13 185h12M19 186h6M20 187h5M22 188h3M23 189h2M28 192h1M29 193h3"/>
</g>
<rect x="666" y="40" width="4" height="632" fill="#fff"/>
<g transform="translate(224.5,665.8) scale(3.2,-3.2075)" stroke-width="1.02" fill="none" shape-rendering="crispEdges">
<path stroke="#080808" stroke-width="1.32" d="M58.84 0h4.32M67.84 0h6.32M74.84 0h3.32M79.84 0h6.32M123.84 0h4.32M58.84 1h4.32M67.84 1h6.32M79.84 1h6.32M112.84 1h3.32M123.84 1h4.32M83.84 2h2.32M112.84 2h3.32M123.84 2h3.32M47.84 3h8.32M65.84 3h1.32M83.84 3h2.32M112.84 3h3.32M32.84 4h3.32M38.84 4h5.32M47.84 4h8.32M63.84 4h4.32M83.84 4h2.32M108.84 4h7.32M32.84 5h4.32M38.84 5h5.32M47.84 5h8.32M63.84 5h4.32M108.84 5h4.32M121.84 5h2.32M32.84 6h4.32M38.84 6h5.32M47.84 6h8.32M63.84 6h4.32M107.84 6h5.32M120.84 6h3.32M32.84 7h4.32M38.84 7h11.32M51.84 7h4.32M62.84 7h5.32M107.84 7h5.32M120.84 7h3.32M32.84 8h3.32M38.84 8h11.32M51.84 8h4.32M62.84 8h4.32M107.84 8h3.32M120.84 8h3.32M127.84 8h4.32M32.84 9h3.32M43.84 9h6.32M53.84 9h1.32M119.84 9h4.32M127.84 9h4.32M43.84 10h6.32M50.84 10h4.32M104.84 10h2.32M119.84 10h3.32M126.84 10h5.32M35.84 11h6.32M42.84 11h6.32M50.84 11h4.32M59.84 11h6.32M104.84 11h4.32M118.84 11h4.32M126.84 11h4.32M35.84 12h6.32M42.84 12h6.32M50.84 12h4.32M59.84 12h6.32M104.84 12h4.32M118.84 12h4.32M127.84 12h3.32M35.84 13h6.32M42.84 13h6.32M50.84 13h4.32M59.84 13h6.32M106.84 13h2.32M117.84 13h4.32M35.84 14h6.32M43.84 14h2.32M50.84 14h4.32M59.84 14h4.32M106.84 14h3.32M116.84 14h5.32M35.84 15h6.32M43.84 15h2.32M59.84 15h4.32M106.84 15h4.32M116.84 15h5.32M135.84 15h2.32M8.84 16h1.32M45.84 16h7.32M59.84 16h4.32M105.84 16h5.32M116.84 16h3.32M135.84 16h2.32M8.84 17h1.32M45.84 17h7.32M59.84 17h4.32M65.84 17h3.32M105.84 17h4.32M116.84 17h3.32M135.84 17h2.32M8.84 18h2.32M16.84 18h8.32M39.84 18h16.32M59.84 18h4.32M65.84 18h6.32M116.84 18h2.32M123.84 18h4.32M135.84 18h2.32M9.84 19h1.32M16.84 19h8.32M39.84 19h16.32M59.84 19h4.32M64.84 19h9.32M122.84 19h5.32M9.84 20h1.32M16.84 20h8.32M39.84 20h16.32M60.84 20h3.32M64.84 20h15.32M113.84 20h3.32M122.84 20h5.32M9.84 21h2.32M16.84 21h8.32M39.84 21h16.32M60.84 21h5.32M69.84 21h11.32M113.84 21h3.32M122.84 21h5.32M10.84 22h1.32M19.84 22h3.32M39.84 22h16.32M60.84 22h5.32M72.84 22h10.32M113.84 22h2.32M122.84 22h3.32M132.84 22h4.32M10.84 23h1.32M19.84 23h3.32M39.84 23h9.32M60.84 23h5.32M76.84 23h9.32M113.84 23h2.32M132.84 23h4.32M10.84 24h1.32M39.84 24h9.32M60.84 24h5.32M78.84 24h8.32M112.84 24h3.32M132.84 24h4.32M11.84 25h1.32M39.84 25h7.32M60.84 25h5.32M79.84 25h7.32M101.84 25h4.32M112.84 25h3.32M132.84 25h4.32M11.84 26h1.32M84.84 26h1.32M101.84 26h4.32M111.84 26h3.32M11.84 27h1.32M101.84 27h4.32M111.84 27h3.32M132.84 27h5.32M11.84 28h2.32M90.84 28h4.32M102.84 28h2.32M110.84 28h4.32M132.84 28h5.32M12.84 29h1.32M90.84 29h6.32M110.84 29h2.32M132.84 29h5.32M12.84 30h1.32M68.84 30h5.32M80.84 30h3.32M90.84 30h6.32M132.84 30h5.32M12.84 31h2.32M68.84 31h5.32M80.84 31h3.32M91.84 31h5.32M114.84 31h3.32M13.84 32h1.32M68.84 32h5.32M79.84 32h3.32M114.84 32h3.32M13.84 33h37.32M68.84 33h5.32M79.84 33h3.32M107.84 33h3.32M114.84 33h3.32M49.84 34h1.32M68.84 34h5.32M74.84 34h9.32M84.84 34h3.32M107.84 34h3.32M114.84 34h3.32M49.84 35h1.32M74.84 35h5.32M80.84 35h8.32M96.84 35h4.32M107.84 35h3.32M114.84 35h3.32M133.84 35h4.32M49.84 36h1.32M74.84 36h5.32M80.84 36h7.32M96.84 36h4.32M107.84 36h5.32M133.84 36h4.32M-0.16 37h9.32M49.84 37h1.32M61.84 37h5.32M77.84 37h2.32M80.84 37h6.32M96.84 37h4.32M107.84 37h5.32M115.84 37h3.32M133.84 37h4.32M-0.16 38h9.32M49.84 38h1.32M61.84 38h5.32M83.84 38h3.32M93.84 38h7.32M106.84 38h6.32M114.84 38h4.32M-0.16 39h9.32M49.84 39h1.32M61.84 39h5.32M69.84 39h3.32M90.84 39h9.32M105.84 39h7.32M114.84 39h4.32M49.84 40h1.32M61.84 40h5.32M69.84 40h3.32M75.84 40h2.32M90.84 40h8.32M105.84 40h5.32M114.84 40h5.32M49.84 41h1.32M69.84 41h3.32M75.84 41h4.32M91.84 41h7.32M105.84 41h4.32M115.84 41h4.32M49.84 42h1.32M75.84 42h4.32M92.84 42h6.32M105.84 42h4.32M115.84 42h3.32M134.84 42h3.32M24.84 43h7.32M49.84 43h1.32M75.84 43h5.32M85.84 43h3.32M105.84 43h2.32M120.84 43h5.32M134.84 43h3.32M24.84 44h7.32M49.84 44h1.32M70.84 44h3.32M85.84 44h6.32M106.84 44h1.32M120.84 44h5.32M134.84 44h3.32M24.84 45h7.32M49.84 45h1.32M70.84 45h3.32M84.84 45h7.32M105.84 45h3.32M120.84 45h5.32M24.84 46h7.32M49.84 46h1.32M84.84 46h7.32M105.84 46h3.32M120.84 46h4.32M25.84 47h5.32M49.84 47h1.32M65.84 47h8.32M83.84 47h8.32M104.84 47h4.32M49.84 48h1.32M65.84 48h8.32M83.84 48h8.32M104.84 48h4.32M49.84 49h1.32M65.84 49h8.32M81.84 49h9.32M104.84 49h3.32M119.84 49h6.32M49.84 50h1.32M65.84 50h8.32M81.84 50h9.32M109.84 50h2.32M119.84 50h6.32M49.84 51h1.32M65.84 51h8.32M74.84 51h15.32M109.84 51h2.32M119.84 51h6.32M49.84 52h1.32M65.84 52h5.32M74.84 52h15.32M109.84 52h2.32M119.84 52h2.32M49.84 53h1.32M74.84 53h17.32M109.84 53h2.32M136.84 53h1.32M49.84 54h1.32M74.84 54h18.32M110.84 54h1.32M112.84 54h2.32M136.84 54h1.32M49.84 55h1.32M74.84 55h19.32M100.84 55h2.32M110.84 55h4.32M136.84 55h1.32M49.84 56h1.32M64.84 56h5.32M81.84 56h11.32M99.84 56h4.32M110.84 56h4.32M136.84 56h1.32M49.84 57h1.32M64.84 57h5.32M74.84 57h7.32M82.84 57h10.32M99.84 57h4.32M110.84 57h4.32M123.84 57h3.32M49.84 58h1.32M64.84 58h5.32M74.84 58h7.32M85.84 58h6.32M98.84 58h5.32M111.84 58h3.32M121.84 58h5.32M49.84 59h1.32M64.84 59h5.32M74.84 59h7.32M86.84 59h4.32M98.84 59h5.32M121.84 59h5.32M49.84 60h1.32M64.84 60h6.32M74.84 60h7.32M98.84 60h3.32M121.84 60h4.32M49.84 61h1.32M64.84 61h6.32M74.84 61h7.32M99.84 61h1.32M49.84 62h1.32M64.84 62h2.32M68.84 62h2.32M49.84 63h1.32M64.84 63h2.32M86.84 63h2.32M104.84 63h3.32M49.84 64h1.32M64.84 64h2.32M85.84 64h3.32M104.84 64h3.32M123.84 64h5.32M49.84 65h1.32M84.84 65h4.32M104.84 65h3.32M123.84 65h5.32M49.84 66h1.32M84.84 66h3.32M104.84 66h3.32M123.84 66h5.32M49.84 67h1.32M84.84 67h2.32M104.84 67h3.32M124.84 67h2.32M49.84 68h1.32M64.84 68h6.32M49.84 69h1.32M64.84 69h6.32M78.84 69h2.32M83.84 69h2.32M92.84 69h3.32M132.84 69h2.32M49.84 70h1.32M64.84 70h6.32M77.84 70h4.32M82.84 70h3.32M92.84 70h3.32M113.84 70h4.32M129.84 70h5.32M49.84 71h1.32M64.84 71h6.32M77.84 71h7.32M90.84 71h4.32M106.84 71h5.32M113.84 71h4.32M128.84 71h6.32M49.84 72h1.32M64.84 72h6.32M78.84 72h5.32M90.84 72h4.32M106.84 72h5.32M113.84 72h4.32M128.84 72h6.32M49.84 73h1.32M64.84 73h6.32M81.84 73h1.32M90.84 73h3.32M106.84 73h5.32M128.84 73h6.32M49.84 74h1.32M76.84 74h2.32M106.84 74h5.32M128.84 74h4.32M49.84 75h1.32M75.84 75h3.32M88.84 75h1.32M109.84 75h2.32M117.84 75h2.32M49.84 76h1.32M74.84 76h4.32M87.84 76h3.32M116.84 76h4.32M49.84 77h1.32M60.84 77h4.32M73.84 77h5.32M86.84 77h4.32M112.84 77h2.32M116.84 77h4.32M49.84 78h1.32M60.84 78h4.32M72.84 78h5.32M86.84 78h4.32M109.84 78h5.32M116.84 78h4.32M49.84 79h1.32M60.84 79h4.32M72.84 79h4.32M85.84 79h4.32M107.84 79h7.32M49.84 80h1.32M85.84 80h4.32M108.84 80h5.32M49.84 81h1.32M104.84 81h2.32M108.84 81h2.32M49.84 82h1.32M61.84 82h4.32M83.84 82h3.32M102.84 82h4.32M49.84 83h1.32M61.84 83h4.32M72.84 83h3.32M83.84 83h3.32M102.84 83h5.32M131.84 83h6.32M49.84 84h1.32M61.84 84h4.32M72.84 84h3.32M81.84 84h5.32M101.84 84h6.32M131.84 84h6.32M49.84 85h1.32M61.84 85h4.32M72.84 85h3.32M81.84 85h4.32M101.84 85h6.32M132.84 85h5.32M49.84 86h1.32M61.84 86h4.32M80.84 86h4.32M101.84 86h6.32M133.84 86h4.32M49.84 87h1.32M80.84 87h3.32M97.84 87h2.32M102.84 87h3.32M133.84 87h4.32M49.84 88h1.32M97.84 88h4.32M134.84 88h3.32M49.84 89h1.32M59.84 89h5.32M99.84 89h3.32M134.84 89h3.32M49.84 90h1.32M59.84 90h5.32M78.84 90h2.32M100.84 90h2.32M135.84 90h2.32M49.84 91h1.32M59.84 91h5.32M78.84 91h3.32M101.84 91h1.32M118.84 91h6.32M49.84 92h1.32M59.84 92h5.32M77.84 92h4.32M94.84 92h3.32M116.84 92h8.32M49.84 93h1.32M76.84 93h5.32M94.84 93h4.32M116.84 93h8.32M49.84 94h1.32M75.84 94h7.32M94.84 94h4.32M116.84 94h8.32M49.84 95h1.32M59.84 95h5.32M75.84 95h7.32M95.84 95h4.32M116.84 95h9.32M49.84 96h1.32M59.84 96h5.32M75.84 96h8.32M96.84 96h3.32M116.84 96h9.32M49.84 97h1.32M59.84 97h5.32M75.84 97h4.32M80.84 97h3.32M116.84 97h10.32M49.84 98h1.32M59.84 98h5.32M106.84 98h4.32M119.84 98h7.32M49.84 99h1.32M59.84 99h5.32M103.84 99h7.32M121.84 99h6.32M49.84 100h1.32M100.84 100h11.32M119.84 100h8.32M49.84 101h1.32M94.84 101h17.32M119.84 101h8.32M49.84 102h1.32M69.84 102h3.32M90.84 102h21.32M119.84 102h8.32M49.84 103h1.32M68.84 103h4.32M88.84 103h23.32M119.84 103h8.32M49.84 104h1.32M68.84 104h4.32M88.84 104h11.32M105.84 104h7.32M119.84 104h8.32M49.84 105h1.32M68.84 105h4.32M89.84 105h7.32M105.84 105h8.32M119.84 105h8.32M49.84 106h1.32M68.84 106h3.32M89.84 106h6.32M105.84 106h8.32M119.84 106h6.32M49.84 107h1.32M90.84 107h5.32M105.84 107h8.32M122.84 107h3.32M49.84 108h1.32M91.84 108h5.32M105.84 108h8.32M122.84 108h5.32M49.84 109h1.32M91.84 109h5.32M106.84 109h7.32M119.84 109h8.32M49.84 110h1.32M91.84 110h5.32M107.84 110h6.32M118.84 110h10.32M49.84 111h1.32M92.84 111h5.32M107.84 111h21.32M49.84 112h1.32M92.84 112h5.32M107.84 112h21.32M49.84 113h1.32M66.84 113h4.32M92.84 113h6.32M107.84 113h11.32M119.84 113h9.32M49.84 114h1.32M66.84 114h4.32M93.84 114h5.32M103.84 114h14.32M119.84 114h9.32M49.84 115h1.32M66.84 115h4.32M93.84 115h5.32M101.84 115h14.32M119.84 115h10.32M49.84 116h1.32M66.84 116h4.32M93.84 116h12.32M108.84 116h5.32M119.84 116h10.32M49.84 117h1.32M66.84 117h4.32M93.84 117h12.32M119.84 117h9.32M49.84 118h1.32M85.84 118h4.32M94.84 118h11.32M120.84 118h7.32M49.84 119h1.32M83.84 119h6.32M94.84 119h12.32M121.84 119h2.32M49.84 120h1.32M83.84 120h6.32M94.84 120h12.32M49.84 121h1.32M83.84 121h6.32M94.84 121h2.32M104.84 121h2.32M49.84 122h1.32M104.84 122h2.32M49.84 123h1.32M105.84 123h1.32M49.84 124h1.32M105.84 124h2.32M49.84 125h1.32M105.84 125h2.32M49.84 126h1.32M105.84 126h2.32M49.84 127h1.32M105.84 127h3.32M49.84 128h1.32M105.84 128h4.32M49.84 129h1.32M105.84 129h5.32M18.84 130h13.32M33.84 130h11.32M49.84 130h1.32M105.84 130h5.32M18.84 131h13.32M33.84 131h11.32M49.84 131h1.32M105.84 131h5.32M18.84 132h13.32M33.84 132h11.32M49.84 132h1.32M106.84 132h6.32M18.84 133h13.32M33.84 133h11.32M49.84 133h1.32M78.84 133h10.32M106.84 133h6.32M33.84 134h11.32M49.84 134h1.32M78.84 134h10.32M106.84 134h6.32M127.84 134h5.32M24.84 135h7.32M33.84 135h11.32M49.84 135h1.32M78.84 135h10.32M107.84 135h5.32M127.84 135h5.32M24.84 136h7.32M33.84 136h11.32M49.84 136h1.32M65.84 136h2.32M78.84 136h10.32M107.84 136h5.32M127.84 136h5.32M24.84 137h7.32M49.84 137h1.32M65.84 137h2.32M107.84 137h5.32M127.84 137h5.32M24.84 138h7.32M49.84 138h1.32M65.84 138h2.32M107.84 138h5.32M127.84 138h5.32M18.84 139h3.32M24.84 139h7.32M49.84 139h1.32M65.84 139h2.32M107.84 139h5.32M127.84 139h5.32M18.84 140h3.32M49.84 140h1.32M65.84 140h2.32M107.84 140h6.32M18.84 141h3.32M49.84 141h1.32M108.84 141h5.32M18.84 142h3.32M49.84 142h1.32M108.84 142h6.32M18.84 143h3.32M49.84 143h1.32M109.84 143h5.32M18.84 144h3.32M49.84 144h1.32M109.84 144h6.32M18.84 145h3.32M49.84 145h1.32M110.84 145h5.32M18.84 146h3.32M49.84 146h1.32M64.84 146h3.32M76.84 146h4.32M110.84 146h5.32M18.84 147h3.32M49.84 147h1.32M64.84 147h3.32M76.84 147h4.32M110.84 147h5.32M18.84 148h3.32M28.84 148h3.32M49.84 148h1.32M64.84 148h3.32M76.84 148h4.32M110.84 148h5.32M18.84 149h3.32M28.84 149h3.32M49.84 149h1.32M64.84 149h3.32M76.84 149h4.32M10.84 150h3.32M18.84 150h3.32M28.84 150h3.32M49.84 150h1.32M9.84 151h4.32M18.84 151h3.32M28.84 151h3.32M49.84 151h1.32M8.84 152h5.32M18.84 152h4.32M28.84 152h3.32M49.84 152h1.32M8.84 153h5.32M18.84 153h4.32M28.84 153h3.32M49.84 153h1.32M8.84 154h5.32M18.84 154h4.32M28.84 154h3.32M49.84 154h1.32M109.84 154h10.32M8.84 155h4.32M18.84 155h4.32M28.84 155h3.32M49.84 155h1.32M109.84 155h10.32M7.84 156h5.32M18.84 156h4.32M28.84 156h3.32M49.84 156h1.32M109.84 156h11.32M7.84 157h4.32M18.84 157h4.32M28.84 157h3.32M49.84 157h1.32M109.84 157h11.32M6.84 158h5.32M18.84 158h4.32M28.84 158h3.32M49.84 158h1.32M6.84 159h3.32M18.84 159h4.32M28.84 159h3.32M49.84 159h1.32M5.84 160h4.32M18.84 160h3.32M28.84 160h3.32M49.84 160h1.32M5.84 161h3.32M18.84 161h3.32M28.84 161h3.32M49.84 161h1.32M5.84 162h3.32M18.84 162h3.32M28.84 162h3.32M49.84 162h1.32M4.84 163h3.32M18.84 163h3.32M28.84 163h3.32M49.84 163h1.32M4.84 164h3.32M18.84 164h3.32M28.84 164h3.32M49.84 164h1.32M6.84 165h3.32M18.84 165h3.32M28.84 165h3.32M49.84 165h1.32M7.84 166h3.32M18.84 166h3.32M28.84 166h3.32M49.84 166h1.32M123.84 166h5.32M7.84 167h3.32M18.84 167h3.32M28.84 167h3.32M49.84 167h1.32M123.84 167h8.32M7.84 168h3.32M18.84 168h3.32M49.84 168h1.32M123.84 168h8.32M7.84 169h3.32M18.84 169h2.32M49.84 169h1.32M123.84 169h9.32M7.84 170h3.32M18.84 170h2.32M49.84 170h1.32M123.84 170h13.32M18.84 171h2.32M49.84 171h1.32M88.84 171h4.32M93.84 171h5.32M114.84 171h4.32M123.84 171h13.32M49.84 172h1.32M88.84 172h4.32M93.84 172h5.32M114.84 172h4.32M123.84 172h13.32M50.84 173h1.32M95.84 173h3.32M114.84 173h4.32M123.84 173h13.32M51.84 174h1.32M80.84 174h4.32M90.84 174h2.32M95.84 174h3.32M114.84 174h4.32M123.84 174h13.32M52.84 175h1.32M66.84 175h2.32M80.84 175h4.32M90.84 175h4.32M95.84 175h3.32M99.84 175h6.32M106.84 175h5.32M53.84 176h1.32M66.84 176h8.32M80.84 176h4.32M90.84 176h5.32M99.84 176h6.32M106.84 176h5.32M54.84 177h1.32M66.84 177h7.32M80.84 177h4.32M89.84 177h6.32M99.84 177h6.32M106.84 177h5.32M124.84 177h5.32M130.84 177h3.32M55.84 178h1.32M66.84 178h5.32M75.84 178h3.32M89.84 178h6.32M99.84 178h6.32M106.84 178h5.32M124.84 178h5.32M130.84 178h3.32M56.84 179h1.32M68.84 179h3.32M73.84 179h5.32M90.84 179h4.32M99.84 179h6.32M124.84 179h5.32M130.84 179h3.32M57.84 180h1.32M69.84 180h7.32M124.84 180h5.32M130.84 180h3.32M58.84 181h1.32M69.84 181h5.32M69.84 182h4.32M83.84 182h3.32M82.84 183h5.32M82.84 184h6.32M114.84 184h8.32M126.84 184h4.32M134.84 184h3.32M82.84 185h7.32M114.84 185h8.32M126.84 185h4.32M134.84 185h3.32M82.84 186h8.32M114.84 186h8.32M126.84 186h4.32M24.84 187h2.32M83.84 187h8.32M106.84 187h2.32M114.84 187h8.32M126.84 187h4.32M136.84 187h1.32M24.84 188h5.32M84.84 188h8.32M106.84 188h2.32M136.84 188h1.32M24.84 189h7.32M86.84 189h6.32M106.84 189h2.32M136.84 189h1.32M24.84 190h9.32M86.84 190h6.32M106.84 190h2.32M136.84 190h1.32M26.84 191h8.32M86.84 191h7.32M106.84 191h2.32M124.84 191h3.32M131.84 191h4.32M136.84 191h1.32M28.84 192h7.32M89.84 192h4.32M101.84 192h7.32M124.84 192h3.32M131.84 192h4.32M136.84 192h1.32M31.84 193h4.32M89.84 193h4.32M101.84 193h9.32M124.84 193h3.32M131.84 193h4.32M50.45 173h1.7M51.45 174h1.7M52.45 175h1.7M53.45 176h1.7M54.45 177h1.7M55.45 178h1.7M56.45 179h1.7M57.45 180h1.7M58.45 181h1.7"/>
</g>
<rect x="654" y="48.4" width="2.6" height="2.6" fill="#ffe800" shape-rendering="crispEdges"/>
<path d="M221.5 667.4H224.5M221.5 664.19H224.5M221.5 660.99H224.5M221.5 657.78H224.5M221.5 654.57H224.5M221.5 651.36H224.5M221.5 648.15H224.5M221.5 644.95H224.5M221.5 641.74H224.5M221.5 638.53H224.5M221.5 635.32H224.5M221.5 632.12H224.5M221.5 628.91H224.5M221.5 625.7H224.5M221.5 622.5H224.5M221.5 619.29H224.5M221.5 616.08H224.5M221.5 612.87H224.5M221.5 609.66H224.5M221.5 606.46H224.5M221.5 603.25H224.5M221.5 600.04H224.5M221.5 596.84H224.5M221.5 593.63H224.5M221.5 590.42H224.5M221.5 587.21H224.5M221.5 584H224.5M221.5 580.8H224.5M221.5 577.59H224.5M221.5 574.38H224.5M221.5 571.17H224.5M221.5 567.97H224.5M221.5 564.76H224.5M221.5 561.55H224.5M221.5 558.35H224.5M221.5 555.14H224.5M221.5 551.93H224.5M221.5 548.72H224.5M221.5 545.51H224.5M221.5 542.31H224.5M221.5 539.1H224.5M221.5 535.89H224.5M221.5 532.68H224.5M221.5 529.48H224.5M221.5 526.27H224.5M221.5 523.06H224.5M221.5 519.86H224.5M221.5 516.65H224.5M221.5 513.44H224.5M221.5 510.23H224.5M221.5 507.02H224.5M221.5 503.82H224.5M221.5 500.61H224.5M221.5 497.4H224.5M221.5 494.19H224.5M221.5 490.99H224.5M221.5 487.78H224.5M221.5 484.57H224.5M221.5 481.37H224.5M221.5 478.16H224.5M221.5 474.95H224.5M221.5 471.74H224.5M221.5 468.53H224.5M221.5 465.33H224.5M221.5 462.12H224.5M221.5 458.91H224.5M221.5 455.7H224.5M221.5 452.5H224.5M221.5 449.29H224.5M221.5 446.08H224.5M221.5 442.88H224.5M221.5 439.67H224.5M221.5 436.46H224.5M221.5 433.25H224.5M221.5 430.04H224.5M221.5 426.84H224.5M221.5 423.63H224.5M221.5 420.42H224.5M221.5 417.21H224.5M221.5 414.01H224.5M221.5 410.8H224.5M221.5 407.59H224.5M221.5 404.38H224.5M221.5 401.18H224.5M221.5 397.97H224.5M221.5 394.76H224.5M221.5 391.55H224.5M221.5 388.35H224.5M221.5 385.14H224.5M221.5 381.93H224.5M221.5 378.72H224.5M221.5 375.52H224.5M221.5 372.31H224.5M221.5 369.1H224.5M221.5 365.89H224.5M221.5 362.69H224.5M221.5 359.48H224.5M221.5 356.27H224.5M221.5 353.06H224.5M221.5 349.86H224.5M221.5 346.65H224.5M221.5 343.44H224.5M221.5 340.23H224.5M221.5 337.03H224.5M221.5 333.82H224.5M221.5 330.61H224.5M221.5 327.4H224.5M221.5 324.2H224.5M221.5 320.99H224.5M221.5 317.78H224.5M221.5 314.57H224.5M221.5 311.37H224.5M221.5 308.16H224.5M221.5 304.95H224.5M221.5 301.74H224.5M221.5 298.54H224.5M221.5 295.33H224.5M221.5 292.12H224.5M221.5 288.91H224.5M221.5 285.71H224.5M221.5 282.5H224.5M221.5 279.29H224.5M221.5 276.08H224.5M221.5 272.88H224.5M221.5 269.67H224.5M221.5 266.46H224.5M221.5 263.25H224.5M221.5 260.05H224.5M221.5 256.84H224.5M221.5 253.63H224.5M221.5 250.42H224.5M221.5 247.22H224.5M221.5 244.01H224.5M221.5 240.8H224.5M221.5 237.59H224.5M221.5 234.39H224.5M221.5 231.18H224.5M221.5 227.97H224.5M221.5 224.76H224.5M221.5 221.56H224.5M221.5 218.35H224.5M221.5 215.14H224.5M221.5 211.94H224.5M221.5 208.73H224.5M221.5 205.52H224.5M221.5 202.31H224.5M221.5 199.1H224.5M221.5 195.9H224.5M221.5 192.69H224.5M221.5 189.48H224.5M221.5 186.27H224.5M221.5 183.07H224.5M221.5 179.86H224.5M221.5 176.65H224.5M221.5 173.44H224.5M221.5 170.24H224.5M221.5 167.03H224.5M221.5 163.82H224.5M221.5 160.61H224.5M221.5 157.41H224.5M221.5 154.2H224.5M221.5 150.99H224.5M221.5 147.78H224.5M221.5 144.58H224.5M221.5 141.37H224.5M221.5 138.16H224.5M221.5 134.95H224.5M221.5 131.75H224.5M221.5 128.54H224.5M221.5 125.33H224.5M221.5 122.12H224.5M221.5 118.92H224.5M221.5 115.71H224.5M221.5 112.5H224.5M221.5 109.29H224.5M221.5 106.09H224.5M221.5 102.88H224.5M221.5 99.67H224.5M221.5 96.46H224.5M221.5 93.26H224.5M221.5 90.05H224.5M221.5 86.84H224.5M221.5 83.63H224.5M221.5 80.43H224.5M221.5 77.22H224.5M221.5 74.01H224.5M221.5 70.8H224.5M221.5 67.6H224.5M221.5 64.39H224.5M221.5 61.18H224.5M221.5 57.98H224.5M221.5 54.77H224.5M221.5 51.56H224.5M221.5 48.35H224.5M221.5 45.14H224.5M224.5 667V669.2M227.7 667V669.2M230.9 667V669.2M234.1 667V669.2M237.3 667V669.2M240.5 667V669.2M243.7 667V669.2M246.9 667V669.2M250.1 667V669.2M253.3 667V669.2M256.5 667V669.2M259.7 667V669.2M262.9 667V669.2M266.1 667V669.2M269.3 667V669.2M272.5 667V669.2M275.7 667V669.2M278.9 667V669.2M282.1 667V669.2M285.3 667V669.2M288.5 667V669.2M291.7 667V669.2M294.9 667V669.2M298.1 667V669.2M301.3 667V669.2M304.5 667V669.2M307.7 667V669.2M310.9 667V669.2M314.1 667V669.2M317.3 667V669.2M320.5 667V669.2M323.7 667V669.2M326.9 667V669.2M330.1 667V669.2M333.3 667V669.2M336.5 667V669.2M339.7 667V669.2M342.9 667V669.2M346.1 667V669.2M349.3 667V669.2M352.5 667V669.2M355.7 667V669.2M358.9 667V669.2M362.1 667V669.2M365.3 667V669.2M368.5 667V669.2M371.7 667V669.2M374.9 667V669.2M378.1 667V669.2M381.3 667V669.2M384.5 667V669.2M387.7 667V669.2M390.9 667V669.2M394.1 667V669.2M397.3 667V669.2M400.5 667V669.2M403.7 667V669.2M406.9 667V669.2M410.1 667V669.2M413.3 667V669.2M416.5 667V669.2M419.7 667V669.2M422.9 667V669.2M426.1 667V669.2M429.3 667V669.2M432.5 667V669.2M435.7 667V669.2M438.9 667V669.2M442.1 667V669.2M445.3 667V669.2M448.5 667V669.2M451.7 667V669.2M454.9 667V669.2M458.1 667V669.2M461.3 667V669.2M464.5 667V669.2M467.7 667V669.2M470.9 667V669.2M474.1 667V669.2M477.3 667V669.2M480.5 667V669.2M483.7 667V669.2M486.9 667V669.2M490.1 667V669.2M493.3 667V669.2M496.5 667V669.2M499.7 667V669.2M502.9 667V669.2M506.1 667V669.2M509.3 667V669.2M512.5 667V669.2M515.7 667V669.2M518.9 667V669.2M522.1 667V669.2M525.3 667V669.2M528.5 667V669.2M531.7 667V669.2M534.9 667V669.2M538.1 667V669.2M541.3 667V669.2M544.5 667V669.2M547.7 667V669.2M550.9 667V669.2M554.1 667V669.2M557.3 667V669.2M560.5 667V669.2M563.7 667V669.2M566.9 667V669.2M570.1 667V669.2M573.3 667V669.2M576.5 667V669.2M579.7 667V669.2M582.9 667V669.2M586.1 667V669.2M589.3 667V669.2M592.5 667V669.2M595.7 667V669.2M598.9 667V669.2M602.1 667V669.2M605.3 667V669.2M608.5 667V669.2M611.7 667V669.2M614.9 667V669.2M618.1 667V669.2M621.3 667V669.2M624.5 667V669.2M627.7 667V669.2M630.9 667V669.2M634.1 667V669.2M637.3 667V669.2M640.5 667V669.2M643.7 667V669.2M646.9 667V669.2M650.1 667V669.2M653.3 667V669.2M656.5 667V669.2M659.7 667V669.2M662.9 667V669.2M666.1 667V669.2" stroke="#000" stroke-width="1.1" fill="none" shape-rendering="crispEdges"/>
<path d="M224.5 667H665" stroke="#000" stroke-width="2" fill="none" shape-rendering="crispEdges"/>
<path d="M288.5 46V672M352.5 46V672M416.5 46V672M480.5 46V672M544.5 46V672M608.5 46V672M219 667.5H665M219 603.5H665M219 539.5H665M219 474.5H665M219 410.5H665M219 346.5H665M219 282.5H665M219 218.5H665M219 154.5H665M219 90.5H665" stroke="#000" stroke-width="1" fill="none" shape-rendering="crispEdges"/>
<rect x="218.5" y="45.5" width="447" height="627" fill="none" stroke="#000" stroke-width="1" shape-rendering="crispEdges"/>
<path d="M224.5 672V680M288.5 672V680M352.5 672V680M416.5 672V680M480.5 672V680M544.5 672V680M608.5 672V680M211 667.5H218M211 603.5H218M211 539.5H218M211 474.5H218M211 410.5H218M211 346.5H218M211 282.5H218M211 218.5H218M211 154.5H218M211 90.5H218" stroke="#000" stroke-width="1" fill="none" shape-rendering="crispEdges"/>
<text x="223.7" y="693.8" text-anchor="middle">0.00</text>
<text x="287.7" y="693.8" text-anchor="middle">60.00</text>
<text x="351.7" y="693.8" text-anchor="middle">120.00</text>
<text x="415.7" y="693.8" text-anchor="middle">180.00</text>
<text x="479.7" y="693.8" text-anchor="middle">240.00</text>
<text x="543.7" y="693.8" text-anchor="middle">300.00</text>
<text x="607.7" y="693.8" text-anchor="middle">360.00</text>
<text x="209.8" y="671.1" text-anchor="end">0.00</text>
<text x="209.8" y="607.1" text-anchor="end">60.00</text>
<text x="209.8" y="543.1" text-anchor="end">120.00</text>
<text x="209.8" y="478.1" text-anchor="end">180.00</text>
<text x="209.8" y="414.1" text-anchor="end">240.00</text>
<text x="209.8" y="350.1" text-anchor="end">300.00</text>
<text x="209.8" y="286.1" text-anchor="end">360.00</text>
<text x="209.8" y="222.1" text-anchor="end">420.00</text>
<text x="209.8" y="158.1" text-anchor="end">480.00</text>
<text x="209.8" y="94.1" text-anchor="end">540.00</text>
<text x="427.6" y="719.9" textLength="33.6" lengthAdjust="spacingAndGlyphs">X (m)</text>
<text transform="translate(150.3,373.4) rotate(-90)" textLength="32.6" lengthAdjust="spacingAndGlyphs">Y (m)</text>
<text class="t1" x="884.3" y="43" textLength="195.5" lengthAdjust="spacingAndGlyphs">Figure 1: BC_END 15.00.01</text>
<text class="t1" x="944.6" y="62.7" textLength="81.4" lengthAdjust="spacingAndGlyphs">19.07.2022</text>
<text class="t3" x="920.6" y="83.7" textLength="127" lengthAdjust="spacingAndGlyphs">x/y Cut at k=2 (z=1.5000 m)</text>
<text class="lt" x="866" y="288.6" textLength="169" lengthAdjust="spacingAndGlyphs">Potential Air Temperature</text>
<rect x="865.5" y="312.5" width="39" height="180" fill="url(#lg)" stroke="#000" stroke-width="1"/>
<path d="M904 312.5H913M904 332.5H913M904 352.5H913M904 372.5H913M904 392.5H913M904 412.5H913M904 432.5H913M904 452.5H913M904 472.5H913M904 492.5H913" stroke="#000" stroke-width="1" fill="none" shape-rendering="crispEdges"/>
<text y="316.1"><tspan x="917.4">&lt;</tspan><tspan x="929.9">28.62</tspan><tspan x="966">°C</tspan></text>
<text y="336.1"><tspan x="916.7">29.69</tspan><tspan x="956.8">°C</tspan></text>
<text y="356.1"><tspan x="916.7">30.75</tspan><tspan x="956.8">°C</tspan></text>
<text y="376.1"><tspan x="916.7">31.82</tspan><tspan x="956.8">°C</tspan></text>
<text y="396.1"><tspan x="916.7">32.88</tspan><tspan x="956.8">°C</tspan></text>
<text y="416.1"><tspan x="916.7">33.94</tspan><tspan x="956.8">°C</tspan></text>
<text y="436.1"><tspan x="916.7">35.01</tspan><tspan x="956.8">°C</tspan></text>
<text y="456.1"><tspan x="916.7">36.07</tspan><tspan x="956.8">°C</tspan></text>
<text y="476.1"><tspan x="916.7">37.14</tspan><tspan x="956.8">°C</tspan></text>
<text y="496.1"><tspan x="917.4">&gt;</tspan><tspan x="929.9">38.20</tspan><tspan x="966">°C</tspan></text>
</svg>
</body></html>
